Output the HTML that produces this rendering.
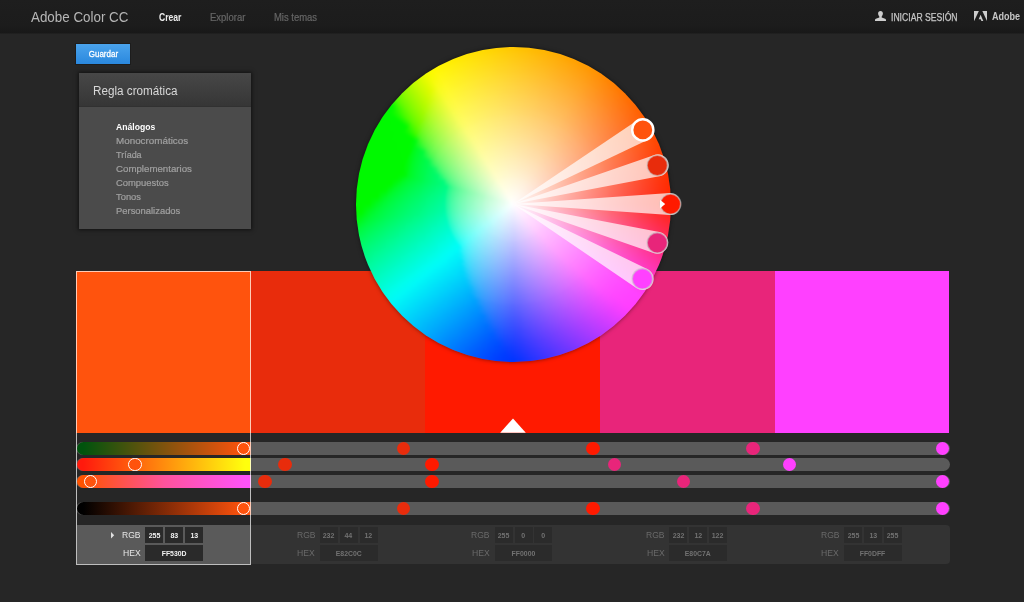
<!DOCTYPE html>
<html lang="es">
<head>
<meta charset="utf-8">
<title>Adobe Color CC</title>
<style>
*{box-sizing:border-box;margin:0;padding:0}
html,body{width:1024px;height:602px;overflow:hidden;background:#262626;font-family:"Liberation Sans",sans-serif;color:#ccc}
.abs{position:absolute}
#hdr{position:absolute;left:0;top:0;width:1024px;height:34px;background:linear-gradient(#1e1e1e 0,#1c1c1c 25px,#181818 33px,#1f1f1f 33px,#202020 34px)}
#hdr .t{position:absolute;white-space:nowrap;line-height:1;transform-origin:0 50%}
#logo{left:31px;top:9.500px;font-size:14px;color:#b6b6b6;transform:scaleX(.956)}
.nav{font-size:10px;top:12.600px;color:#666;-webkit-text-stroke:.2px #666}
#save{position:absolute;left:76px;top:44px;width:54px;height:20px;background:linear-gradient(#4aa3ec,#2a88de);box-shadow:0 0 0 1px rgba(20,20,20,.5);color:#fff;font-size:9.500px;text-align:center;line-height:20px}
#save span{display:inline-block;transform:scaleX(.84);-webkit-text-stroke:.3px #fff}
#panel{position:absolute;left:78.5px;top:72.5px;width:172.5px;height:156px;background:#4b4b4b;box-shadow:0 0 4px 1px rgba(0,0,0,.55)}
#panel .ph{position:absolute;left:0;top:0;width:100%;height:34px;background:linear-gradient(#474747,#363636);border-bottom:1px solid #313131}
#panel .pt{position:absolute;left:14px;top:12px;font-size:12px;line-height:1;color:#d8d8d8;white-space:nowrap;transform:scaleX(.975);transform-origin:0 50%}
#panel ul{position:absolute;left:37px;top:47px;list-style:none}
#panel li{font-size:9.500px;line-height:14px;height:14px;color:#a0a0a0;-webkit-text-stroke:.2px #a0a0a0;white-space:nowrap;transform-origin:0 50%;width:120px}
#panel li.on{color:#fff;font-weight:bold;-webkit-text-stroke:0}
.sw{position:absolute;top:271px;height:162px}
#wheel{position:absolute;left:355.5px;top:46.6px;width:315px;height:315px;border-radius:50%;box-shadow:0 0 4px 0 rgba(0,0,0,.5)}
#wheel .rg{position:absolute;left:0;top:0;width:315px;height:315px;border-radius:50%;overflow:hidden}
#wheel .rb{position:absolute;left:0;top:0;width:315px;height:315px;filter:blur(1.6px)}
#wheel i{position:absolute;left:50%;top:50%;border-radius:50%;display:block}
.trk{position:absolute;left:76px;width:873.5px;height:13px;border-radius:6.5px;background:#5a5a5a}
.grad{position:absolute;left:77px;width:174px;height:13px;border-radius:6.5px 0 0 6.5px}
.dot{position:absolute;width:13.4px;height:13.4px;border-radius:50%;margin:-6.7px 0 0 -6.7px}
.hdl{position:absolute;width:13.6px;height:13.6px;border-radius:50%;margin:-6.8px 0 0 -6.8px;border:1px solid #fff;background:#ff530d}
#vals{position:absolute;left:251px;top:525px;width:698.5px;height:38.5px;background:#333;border-radius:0 4px 4px 0}
#selbox{position:absolute;left:76px;top:271px;width:175px;height:294px;border:1px solid rgba(255,255,255,.7)}
#selpanel{position:absolute;left:77px;top:525px;width:173px;height:39px;background:#5a5a5a}
.lbl{position:absolute;font-size:9.300px;line-height:1;white-space:nowrap;transform-origin:0 50%}
.bx{position:absolute;background:#2b2b2b;font-size:7.800px;font-weight:bold;text-align:center;white-space:nowrap}
.bx span{display:inline-block}
</style>
</head>
<body>
<div id="hdr">
 <div class="t" id="logo">Adobe Color CC</div>
 <div class="t nav" style="left:158.5px;color:#ececec;font-weight:bold;-webkit-text-stroke:0;transform:scaleX(.86)">Crear</div>
 <div class="t nav" style="left:209.5px;transform:scaleX(.95)">Explorar</div>
 <div class="t nav" style="left:274px;transform:scaleX(.945)">Mis temas</div>
 <svg class="abs" style="left:875px;top:11px" width="11" height="10" viewBox="0 0 11 10"><path d="M5.5 0C3.900 0 3.100 1.100 3.100 2.600c0 1.200.500 2.200 1.200 2.800V6.500L.900 7.700C.300 7.900 0 8.300 0 8.900V10h11V8.900c0-.6-.3-1-.9-1.200L6.700 6.500V5.400c.7-.6 1.200-1.600 1.200-2.800C7.900 1.100 7.100 0 5.500 0z" fill="#cdcdcd"/></svg>
 <div class="t" style="left:891px;top:12.600px;font-size:10px;color:#c6c6c6;-webkit-text-stroke:.25px #c6c6c6;transform:scaleX(.862)">INICIAR SESIÓN</div>
 <svg class="abs" style="left:974px;top:11px" width="13.2" height="10.3" viewBox="0 0 13 10" preserveAspectRatio="none"><path d="M0 0h4.800L0 10zM13 0H8.200L13 10zM6.500 3.600L9.300 10H7.400L6.600 7.900H4.600z" fill="#cdcdcd"/></svg>
 <div class="t" style="left:992px;top:11.700px;font-size:10.400px;font-weight:bold;color:#c6c6c6;transform:scaleX(.87)">Adobe</div>
</div>

<div id="save"><span>Guardar</span></div>

<div id="panel">
 <div class="ph"></div>
 <div class="pt">Regla cromática</div>
 <ul>
  <li class="on" style="transform:scaleX(.905)">Análogos</li>
  <li style="transform:scaleX(1.035)">Monocromáticos</li>
  <li style="transform:scaleX(.945)">Tríada</li>
  <li style="transform:scaleX(1.02)">Complementarios</li>
  <li style="transform:scaleX(.99)">Compuestos</li>
  <li style="transform:scaleX(.985)">Tonos</li>
  <li style="transform:scaleX(.99)">Personalizados</li>
 </ul>
</div>

<!-- swatches -->
<div class="sw" style="left:76.0px;width:175.0px;background:#ff530d"></div>
<div class="sw" style="left:250.7px;width:175.0px;background:#e82c0c"></div>
<div class="sw" style="left:425.4px;width:175.0px;background:#ff1a00"></div>
<div class="sw" style="left:600.1px;width:175.0px;background:#e8257a"></div>
<div class="sw" style="left:774.8px;width:174.7px;background:#ff40ff"></div>

<!-- base-colour pointer -->
<svg class="abs" style="left:500px;top:418px" width="26" height="15" viewBox="0 0 26 15"><path d="M.2 14.800L13 .5l12.800 14.300z" fill="#fff"/></svg>

<!-- wheel -->
<div id="wheel"><div class="rg"><div class="rb"><i style="width:331.00px;height:331.00px;margin:-165.50px 0 0 -165.50px;background:conic-gradient(from 90deg,#ff2703,#ff2719,#ff282e,#ff2944,#ff2b5a,#ff2c6f,#ff2f85,#ff319a,#ff34b0,#ff38c5,#ff3bdb,#ff3ff1,#ff41ff,#ff3fff,#ff3eff,#f13dff,#e13cff,#d13aff,#c139ff,#b138ff,#a038ff,#9037ff,#8036ff,#7036ff,#6035ff,#5035ff,#4034ff,#3034ff,#2034ff,#0f34ff,#0135ff,#0039ff,#003fff,#0048ff,#0051ff,#005cfe,#0068fe,#0074fe,#0080fd,#008dfd,#009afd,#00a7fc,#00b5fb,#00c2fb,#00d0fa,#00ddf9,#00ebf8,#00f8f7,#00fdeb,#00fcda,#00fcc9,#00fbb7,#00fba5,#00fa92,#00fa7f,#00fa6b,#00fa55,#00fa3c,#00f915,#00f900,#00f900,#00f900,#00f900,#00f900,#00f900,#00f900,#00f900,#00f900,#00f900,#00f900,#00f900,#00f900,#00fa00,#00fa00,#59fa00,#84fa00,#a5fa00,#c2fb00,#ddfb00,#f7fb00,#fff803,#fff303,#ffee03,#ffe903,#ffe403,#ffe003,#ffdb03,#ffd603,#ffd103,#ffcc03,#ffc703,#ffc203,#ffbd03,#ffb903,#ffb403,#ffaf03,#ffaa03,#ffa503,#ffa003,#ff9c03,#ff9703,#ff9003,#ff8903,#ff8203,#ff7b03,#ff7503,#ff6e03,#ff6703,#ff6103,#ff5b03,#ff5403,#ff4e03,#ff4803,#ff4203,#ff3d03,#ff3803,#ff3303,#ff2f03,#ff2c03,#ff2903,#ff2703)"></i><i style="width:307.12px;height:307.12px;margin:-153.56px 0 0 -153.56px;background:conic-gradient(from 90deg,#ff290a,#ff291f,#ff2a34,#ff2b49,#ff2d5e,#ff2e73,#ff3188,#ff339d,#ff36b2,#ff39c7,#ff3cdc,#ff40f1,#ff42ff,#ff41ff,#ff3fff,#f33eff,#e33dff,#d33cff,#c33bff,#b43aff,#a439ff,#9438ff,#8438ff,#7437ff,#6537ff,#5536ff,#4536ff,#3636ff,#2635ff,#1535ff,#0836ff,#003bff,#0042ff,#004bff,#0055ff,#0060fe,#006bfe,#0077fe,#0083fd,#0090fd,#009dfd,#00aafc,#00b7fb,#00c4fb,#00d1fa,#00def9,#00ebf8,#00f8f7,#00fdec,#00fcdb,#00fcca,#00fbb8,#00fba7,#00fa95,#00fa82,#00fa6f,#00fa5a,#00fa43,#00f923,#00f900,#00f900,#00f900,#00f900,#00f900,#00f900,#00f900,#00f900,#00f900,#00f900,#00f900,#00f900,#00f900,#00fa00,#11fa00,#60fa00,#88fa00,#a8fa00,#c4fb00,#defb00,#f7fb00,#fff80a,#fff30a,#ffef0a,#ffea0a,#ffe50a,#ffe00a,#ffdc0a,#ffd70a,#ffd20a,#ffcd0a,#ffc80a,#ffc40a,#ffbf0a,#ffba0a,#ffb60a,#ffb10a,#ffac0a,#ffa70a,#ffa30a,#ff9e0a,#ff990a,#ff930a,#ff8c0a,#ff850a,#ff7f0a,#ff780a,#ff710a,#ff6b0a,#ff650a,#ff5e0a,#ff580a,#ff520a,#ff4c0a,#ff460a,#ff410a,#ff3c0a,#ff370a,#ff330a,#ff2f0a,#ff2c0a,#ff290a)"></i><i style="width:299.25px;height:299.25px;margin:-149.62px 0 0 -149.62px;background:conic-gradient(from 90deg,#ff2b10,#ff2c24,#ff2c39,#ff2d4d,#ff2f62,#ff3176,#ff338b,#ff359f,#ff38b4,#ff3bc8,#ff3edd,#ff41f1,#ff43ff,#ff42ff,#ff41ff,#f440ff,#e53eff,#d53dff,#c63cff,#b63cff,#a73bff,#983aff,#8839ff,#7939ff,#6938ff,#5a38ff,#4b38ff,#3b37ff,#2c37ff,#1c37ff,#0e38ff,#033eff,#0046ff,#004fff,#0059fe,#0063fe,#006ffe,#007afe,#0086fd,#0093fd,#009ffc,#00acfc,#00b8fb,#00c5fb,#00d2fa,#00dff9,#00ecf8,#00f9f7,#00fdec,#00fcdc,#00fccb,#00fbba,#00fba9,#00fb98,#00fa86,#00fa73,#00fa5f,#00fa49,#00f92e,#00f910,#00f900,#00f900,#00f900,#00f900,#00f900,#00f900,#00f900,#00f900,#00f900,#00f900,#00f900,#00f900,#00fa00,#2afa00,#66fa00,#8cfa00,#aafa00,#c6fb00,#dffb00,#f7fb06,#fff810,#fff410,#ffef10,#ffea10,#ffe610,#ffe110,#ffdc10,#ffd810,#ffd310,#ffce10,#ffca10,#ffc510,#ffc110,#ffbc10,#ffb710,#ffb310,#ffae10,#ffaa10,#ffa510,#ffa010,#ff9c10,#ff9510,#ff8f10,#ff8810,#ff8210,#ff7b10,#ff7510,#ff6f10,#ff6810,#ff6210,#ff5c10,#ff5610,#ff5010,#ff4a10,#ff4510,#ff4010,#ff3b10,#ff3610,#ff3210,#ff2e10,#ff2b10)"></i><i style="width:291.38px;height:291.38px;margin:-145.69px 0 0 -145.69px;background:conic-gradient(from 90deg,#ff2e16,#ff2f2a,#ff2f3e,#ff3052,#ff3266,#ff337a,#ff358e,#ff38a2,#ff3ab6,#ff3dca,#ff40de,#ff43f2,#ff45ff,#ff44ff,#ff43ff,#f541ff,#e640ff,#d73fff,#c83eff,#b93eff,#aa3dff,#9b3cff,#8c3cff,#7d3bff,#6e3bff,#5f3aff,#503aff,#413aff,#3239ff,#2239ff,#143bff,#0a41ff,#0049ff,#0052ff,#005cfe,#0067fe,#0072fe,#007efe,#008afd,#0095fd,#00a2fc,#00aefc,#00bafb,#00c7fb,#00d3fa,#00e0f9,#00ecf8,#00f9f7,#00fdec,#00fcdc,#00fccc,#00fbbc,#00fbab,#00fb9a,#00fa89,#00fa77,#00fa64,#00fa4f,#00fa37,#00f921,#00f900,#00f900,#00f900,#00f900,#00f900,#00f900,#00f900,#00f900,#00f900,#00f900,#00f900,#00fa00,#00fa00,#39fa00,#6cfa00,#8ffa00,#adfa00,#c7fb00,#e0fb00,#f7fb0f,#fff816,#fff416,#ffef16,#ffeb16,#ffe616,#ffe216,#ffdd16,#ffd916,#ffd416,#ffd016,#ffcb16,#ffc716,#ffc216,#ffbe16,#ffb916,#ffb516,#ffb016,#ffac16,#ffa716,#ffa316,#ff9e16,#ff9816,#ff9216,#ff8b16,#ff8516,#ff7f16,#ff7816,#ff7216,#ff6c16,#ff6616,#ff6016,#ff5a16,#ff5416,#ff4f16,#ff4916,#ff4416,#ff3f16,#ff3a16,#ff3616,#ff3216,#ff2e16)"></i><i style="width:283.50px;height:283.50px;margin:-141.75px 0 0 -141.75px;background:conic-gradient(from 90deg,#ff311d,#ff3230,#ff3343,#ff3457,#ff356a,#ff377e,#ff3991,#ff3ba4,#ff3db8,#ff40cb,#ff42df,#ff45f2,#ff47ff,#ff46ff,#ff45ff,#f644ff,#e843ff,#d942ff,#cb41ff,#bc40ff,#ad3fff,#9f3fff,#903eff,#813eff,#733dff,#643dff,#553cff,#473cff,#383cff,#283cff,#1b3eff,#1245ff,#004dff,#0056ff,#0060fe,#006bfe,#0076fe,#0081fe,#008dfd,#0098fd,#00a4fc,#00b0fc,#00bcfb,#00c8fb,#00d4fa,#00e0f9,#00edf8,#00f9f7,#00fded,#00fcdd,#00fccd,#00fbbe,#00fbad,#00fb9d,#00fa8c,#00fa7b,#00fa69,#00fa55,#00fa3f,#00f92d,#00f911,#00f900,#00f900,#00f900,#00f900,#00f900,#00f900,#00f900,#00f900,#00f900,#00f900,#00fa00,#00fa00,#45fa00,#72fa00,#93fa00,#affa00,#c9fb00,#e1fb00,#f8fb17,#fff81d,#fff41d,#fff01d,#ffeb1d,#ffe71d,#ffe21d,#ffde1d,#ffda1d,#ffd51d,#ffd11d,#ffcc1d,#ffc81d,#ffc41d,#ffbf1d,#ffbb1d,#ffb71d,#ffb21d,#ffae1d,#ffaa1d,#ffa51d,#ffa11d,#ff9b1d,#ff951d,#ff8e1d,#ff881d,#ff821d,#ff7c1d,#ff761d,#ff701d,#ff6a1d,#ff641d,#ff5e1d,#ff591d,#ff531d,#ff4d1d,#ff481d,#ff431d,#ff3e1d,#ff3a1d,#ff351d,#ff311d)"></i><i style="width:275.62px;height:275.62px;margin:-137.81px 0 0 -137.81px;background:conic-gradient(from 90deg,#ff3523,#ff3636,#ff3749,#ff385c,#ff396e,#ff3a81,#ff3c94,#ff3ea7,#ff40ba,#ff43cd,#ff45e0,#ff48f2,#ff4aff,#ff49ff,#ff47ff,#f847ff,#e946ff,#db45ff,#cd44ff,#bf43ff,#b042ff,#a242ff,#9441ff,#8541ff,#7740ff,#6940ff,#5b40ff,#4c3fff,#3d3fff,#2e3fff,#2141ff,#1a48ff,#0a51ff,#005aff,#0064fe,#006ffe,#0079fe,#0084fd,#0090fd,#009bfd,#00a7fc,#00b2fc,#00befb,#00cafa,#00d5fa,#00e1f9,#00edf8,#00f9f7,#00fded,#00fcde,#00fccf,#00fbbf,#00fbb0,#00fba0,#00fa90,#00fa7f,#00fa6d,#00fa5b,#00fa46,#00fa36,#00f922,#00f900,#00f900,#00f900,#00f900,#00f900,#00f900,#00f900,#00f900,#00f900,#00fa00,#00fa00,#00fa00,#4ffa00,#78fa00,#97fa00,#b2fa00,#cafb00,#e2fb0f,#f8fb1f,#fff923,#fff423,#fff023,#ffec23,#ffe723,#ffe323,#ffdf23,#ffdb23,#ffd623,#ffd223,#ffce23,#ffca23,#ffc523,#ffc123,#ffbd23,#ffb923,#ffb423,#ffb023,#ffac23,#ffa823,#ffa423,#ff9d23,#ff9723,#ff9123,#ff8b23,#ff8523,#ff7f23,#ff7a23,#ff7423,#ff6e23,#ff6823,#ff6223,#ff5d23,#ff5723,#ff5223,#ff4d23,#ff4723,#ff4323,#ff3e23,#ff3923,#ff3523)"></i><i style="width:267.75px;height:267.75px;margin:-133.88px 0 0 -133.88px;background:conic-gradient(from 90deg,#ff3929,#ff3a3c,#ff3b4e,#ff3c60,#ff3d73,#ff3e85,#ff4097,#ff42aa,#ff44bc,#ff46ce,#ff48e0,#ff4bf3,#ff4dff,#ff4bff,#ff4bff,#f94aff,#eb49ff,#dd48ff,#cf47ff,#c146ff,#b346ff,#a645ff,#9845ff,#8a44ff,#7c44ff,#6e43ff,#6043ff,#5243ff,#4343ff,#3442ff,#2845ff,#214cff,#1555ff,#005eff,#0068fe,#0073fe,#007dfe,#0088fd,#0093fd,#009efd,#00a9fc,#00b4fc,#00c0fb,#00cbfa,#00d6fa,#00e2f9,#00edf8,#00f9f7,#00fded,#00fcdf,#00fcd0,#00fbc1,#00fbb2,#00fba2,#00fb93,#00fa83,#00fa72,#00fa60,#00fa4d,#00fa3f,#00f92e,#00f916,#00f900,#00f900,#00f900,#00f900,#00f900,#00f900,#00f900,#00f900,#00fa00,#00fa00,#03fa00,#58fa00,#7dfa00,#9afa00,#b4fb00,#ccfb09,#e3fb1b,#f8fb26,#fff929,#fff429,#fff029,#ffec29,#ffe829,#ffe429,#ffe029,#ffdc29,#ffd729,#ffd329,#ffcf29,#ffcb29,#ffc729,#ffc329,#ffbf29,#ffbb29,#ffb629,#ffb229,#ffae29,#ffaa29,#ffa629,#ffa029,#ff9a29,#ff9429,#ff8f29,#ff8929,#ff8329,#ff7d29,#ff7829,#ff7229,#ff6c29,#ff6729,#ff6129,#ff5c29,#ff5629,#ff5129,#ff4c29,#ff4729,#ff4229,#ff3e29,#ff3929)"></i><i style="width:259.88px;height:259.88px;margin:-129.94px 0 0 -129.94px;background:conic-gradient(from 90deg,#ff3e30,#ff3f42,#ff3f53,#ff4065,#ff4177,#ff4389,#ff449a,#ff46ac,#ff48be,#ff4ad0,#ff4ce1,#ff4ef3,#ff50ff,#ff4fff,#ff4eff,#fa4dff,#ec4cff,#df4bff,#d14bff,#c44aff,#b64aff,#a949ff,#9b48ff,#8e48ff,#8048ff,#7347ff,#6547ff,#5747ff,#4946ff,#3a46ff,#2e49ff,#2851ff,#1e59ff,#0a63fe,#006cfe,#0076fe,#0081fe,#008bfd,#0096fd,#00a1fd,#00abfc,#00b6fc,#00c1fb,#00cdfa,#00d8fa,#00e3f9,#00eef8,#00f9f8,#00fdee,#00fce0,#00fcd1,#00fbc3,#00fbb4,#00fba5,#00fb96,#00fa87,#00fa77,#00fa66,#00fa54,#00fa47,#00fa38,#00f926,#00f905,#00f900,#00f900,#00f900,#00f900,#00f900,#00f900,#00fa00,#00fa00,#00fa00,#27fa00,#60fa00,#82fa00,#9efa00,#b7fb0a,#cefb1a,#e3fb24,#f8fb2d,#fff930,#fff530,#fff130,#ffed30,#ffe930,#ffe530,#ffe130,#ffdd30,#ffd930,#ffd530,#ffd130,#ffcd30,#ffc930,#ffc530,#ffc130,#ffbd30,#ffb930,#ffb530,#ffb130,#ffad30,#ffa930,#ffa330,#ff9d30,#ff9830,#ff9230,#ff8c30,#ff8730,#ff8130,#ff7b30,#ff7630,#ff7030,#ff6b30,#ff6630,#ff6030,#ff5b30,#ff5630,#ff5130,#ff4c30,#ff4730,#ff4230,#ff3e30)"></i><i style="width:252.00px;height:252.00px;margin:-126.00px 0 0 -126.00px;background:conic-gradient(from 90deg,#ff4336,#ff4347,#ff4459,#ff456a,#ff467b,#ff478c,#ff499d,#ff4aaf,#ff4cc0,#ff4ed1,#ff50e2,#ff52f4,#ff53ff,#ff52ff,#ff52ff,#fb51ff,#ee50ff,#e14fff,#d44fff,#c74eff,#b94eff,#ac4dff,#9f4dff,#924cff,#854cff,#774bff,#6a4bff,#5c4bff,#4f4bff,#404aff,#354dff,#2f55ff,#265eff,#1867fe,#0070fe,#007afe,#0084fe,#008ffd,#0099fd,#00a3fd,#00aefc,#00b9fc,#00c3fb,#00cefa,#00d9fa,#00e4f9,#00eef8,#00f9f8,#00fdee,#00fce0,#00fcd2,#00fcc4,#00fbb6,#00fba8,#00fb99,#00fa8a,#00fa7b,#00fa6b,#00fa5a,#00fa4e,#00fa41,#00fa32,#00f91e,#00f900,#00f900,#00f900,#00f900,#00f900,#00f900,#00fa00,#00fa00,#00fa00,#39fa00,#67fa00,#87fa00,#a1fa10,#b9fb1c,#cffb25,#e4fb2d,#f8fb34,#fff936,#fff536,#fff136,#ffed36,#ffe936,#ffe536,#ffe136,#ffde36,#ffda36,#ffd636,#ffd236,#ffce36,#ffca36,#ffc636,#ffc236,#ffbe36,#ffbb36,#ffb736,#ffb336,#ffaf36,#ffab36,#ffa636,#ffa036,#ff9b36,#ff9536,#ff9036,#ff8a36,#ff8536,#ff7f36,#ff7a36,#ff7536,#ff6f36,#ff6a36,#ff6536,#ff6036,#ff5b36,#ff5636,#ff5136,#ff4c36,#ff4736,#ff4336)"></i><i style="width:244.12px;height:244.12px;margin:-122.06px 0 0 -122.06px;background:conic-gradient(from 90deg,#ff483d,#ff484d,#ff495e,#ff4a6f,#ff4b7f,#ff4c90,#ff4da1,#ff4fb1,#ff50c2,#ff52d3,#ff54e3,#ff56f4,#ff57ff,#ff56ff,#ff56ff,#fc55ff,#ef54ff,#e253ff,#d653ff,#c952ff,#bc52ff,#af51ff,#a351ff,#9650ff,#8950ff,#7c50ff,#6f4fff,#624fff,#544fff,#464fff,#3b51ff,#355aff,#2e62ff,#226bfe,#0d75fe,#007efe,#0088fe,#0092fd,#009cfd,#00a6fc,#00b0fc,#00bbfc,#00c5fb,#00d0fa,#00dafa,#00e4f9,#00eff8,#00f9f8,#00fdee,#00fce1,#00fcd4,#00fcc6,#00fbb8,#00fbab,#00fb9d,#00fa8e,#00fa7f,#00fa70,#00fa60,#00fa55,#00fa49,#00fa3c,#00fa2c,#00f916,#00f900,#00f900,#00f900,#00f900,#00fa00,#00fa00,#00fa00,#00fa00,#47fa00,#6efa0c,#8bfa18,#a5fa20,#bcfb28,#d1fb2e,#e5fb35,#f9fb3b,#fff93d,#fff53d,#fff13d,#ffee3d,#ffea3d,#ffe63d,#ffe23d,#ffdf3d,#ffdb3d,#ffd73d,#ffd33d,#ffcf3d,#ffcc3d,#ffc83d,#ffc43d,#ffc03d,#ffbd3d,#ffb93d,#ffb53d,#ffb23d,#ffae3d,#ffa83d,#ffa33d,#ff9e3d,#ff983d,#ff933d,#ff8e3d,#ff883d,#ff833d,#ff7e3d,#ff793d,#ff743d,#ff6e3d,#ff693d,#ff643d,#ff5f3d,#ff5b3d,#ff563d,#ff513d,#ff4c3d,#ff483d)"></i><i style="width:236.25px;height:236.25px;margin:-118.12px 0 0 -118.12px;background:conic-gradient(from 90deg,#ff4d43,#ff4e53,#ff4e63,#ff4f73,#ff5083,#ff5194,#ff52a4,#ff54b4,#ff55c4,#ff57d4,#ff58e4,#ff5af4,#ff5bff,#ff5aff,#ff5aff,#fd59ff,#f058ff,#e458ff,#d857ff,#cb57ff,#bf56ff,#b356ff,#a655ff,#9a55ff,#8d55ff,#8154ff,#7454ff,#6754ff,#5a54ff,#4c53ff,#4156ff,#3c5eff,#3567ff,#2c70fe,#1d79fe,#0082fe,#008cfe,#0095fd,#009ffd,#00a9fc,#00b3fc,#00bdfb,#00c7fb,#00d1fa,#00dbfa,#00e5f9,#00eff8,#00faf8,#00fdef,#00fce2,#00fcd5,#00fcc8,#00fbbb,#00fbad,#00fba0,#00fb92,#00fa84,#00fa75,#00fa66,#00fa5c,#00fa51,#00fa45,#00fa37,#00fa27,#00f90e,#00f900,#00f900,#00fa00,#00fa00,#00fa00,#00fa08,#01fa12,#52fa1a,#75fa21,#90fa27,#a8fb2c,#befb32,#d2fb37,#e6fb3c,#f9fb41,#fff943,#fff543,#fff243,#ffee43,#ffea43,#ffe743,#ffe343,#ffe043,#ffdc43,#ffd843,#ffd543,#ffd143,#ffcd43,#ffca43,#ffc643,#ffc243,#ffbf43,#ffbb43,#ffb843,#ffb443,#ffb043,#ffab43,#ffa643,#ffa143,#ff9c43,#ff9643,#ff9143,#ff8c43,#ff8743,#ff8243,#ff7d43,#ff7843,#ff7343,#ff6e43,#ff6943,#ff6443,#ff5f43,#ff5b43,#ff5643,#ff5243,#ff4d43)"></i><i style="width:228.38px;height:228.38px;margin:-114.19px 0 0 -114.19px;background:conic-gradient(from 90deg,#ff5249,#ff5359,#ff5468,#ff5478,#ff5588,#ff5697,#ff57a7,#ff58b6,#ff5ac6,#ff5bd5,#ff5de5,#ff5ff5,#ff5fff,#ff5fff,#ff5eff,#fe5eff,#f25dff,#e65cff,#da5cff,#ce5bff,#c25bff,#b65bff,#aa5aff,#9e5aff,#925aff,#8559ff,#7959ff,#6c59ff,#6059ff,#5258ff,#485bff,#4363ff,#3d6bff,#3474fe,#297dfe,#1586fe,#0090fe,#0099fd,#00a2fd,#00acfc,#00b5fc,#00bffb,#00c9fb,#00d3fa,#00dcfa,#00e6f9,#00f0f8,#00faf8,#00fdef,#00fce3,#00fcd6,#00fcca,#00fbbd,#00fbb0,#00fba3,#00fb96,#00fa88,#00fa7a,#00fa6c,#00fa62,#00fa58,#00fa4d,#00fa41,#00fa34,#00fa23,#00f906,#00fa0c,#00fa12,#00fa17,#00fa1c,#00fa20,#2afa25,#5cfa29,#7bfa2e,#95fa32,#abfb37,#c0fb3b,#d4fb3f,#e7fb44,#f9fb48,#fff949,#fff649,#fff249,#ffef49,#ffeb49,#ffe849,#ffe449,#ffe149,#ffdd49,#ffd949,#ffd649,#ffd249,#ffcf49,#ffcb49,#ffc849,#ffc449,#ffc149,#ffbd49,#ffba49,#ffb649,#ffb349,#ffae49,#ffa949,#ffa449,#ff9f49,#ff9a49,#ff9549,#ff9049,#ff8b49,#ff8649,#ff8149,#ff7c49,#ff7849,#ff7349,#ff6e49,#ff6949,#ff6549,#ff6049,#ff5b49,#ff5749,#ff5249)"></i><i style="width:220.50px;height:220.50px;margin:-110.25px 0 0 -110.25px;background:conic-gradient(from 90deg,#ff5850,#ff585f,#ff596e,#ff5a7d,#ff5b8c,#ff5b9b,#ff5caa,#ff5eb9,#ff5fc8,#ff60d7,#ff62e6,#ff63f5,#ff64ff,#ff63ff,#ff63ff,#fe62ff,#f362ff,#e761ff,#dc61ff,#d060ff,#c560ff,#b960ff,#ad5fff,#a15fff,#965fff,#8a5eff,#7e5eff,#725eff,#655eff,#595dff,#4e60ff,#4a68ff,#4470ff,#3c79fe,#3382fe,#258afe,#0893fd,#009cfd,#00a6fd,#00affc,#00b8fc,#00c1fb,#00cbfb,#00d4fa,#00ddfa,#00e7f9,#00f0f9,#00faf8,#00fdf0,#00fce4,#00fcd8,#00fccb,#00fbbf,#00fbb3,#00fba6,#00fb9a,#00fb8d,#00fa7f,#00fa72,#00fa68,#00fa5f,#00fa55,#00fa4a,#00fa3f,#00fa32,#00fa21,#00fa23,#00fa26,#00fa29,#00fa2c,#00fa2f,#3dfa32,#65fa35,#81fa39,#99fb3c,#affb40,#c3fb43,#d6fb47,#e8fb4b,#f9fc4e,#fff950,#fff650,#fff350,#ffef50,#ffec50,#ffe850,#ffe550,#ffe250,#ffde50,#ffdb50,#ffd750,#ffd450,#ffd150,#ffcd50,#ffca50,#ffc650,#ffc350,#ffc050,#ffbc50,#ffb950,#ffb650,#ffb150,#ffac50,#ffa750,#ffa250,#ff9d50,#ff9950,#ff9450,#ff8f50,#ff8a50,#ff8650,#ff8150,#ff7c50,#ff7750,#ff7350,#ff6e50,#ff6a50,#ff6550,#ff6150,#ff5c50,#ff5850)"></i><i style="width:212.62px;height:212.62px;margin:-106.31px 0 0 -106.31px;background:conic-gradient(from 90deg,#ff5e56,#ff5e65,#ff5f73,#ff5f82,#ff6090,#ff619e,#ff62ad,#ff63bb,#ff64ca,#ff65d8,#ff66e7,#ff68f5,#ff69ff,#ff68ff,#ff68ff,#ff67ff,#f467ff,#e966ff,#de66ff,#d365ff,#c765ff,#bc65ff,#b164ff,#a564ff,#9a64ff,#8e63ff,#8363ff,#7763ff,#6b63ff,#5f63ff,#5565ff,#506dff,#4b75ff,#447dfe,#3c86fe,#318efe,#2097fd,#00a0fd,#00a9fd,#00b2fc,#00bbfc,#00c4fb,#00cdfb,#00d6fa,#00dffa,#00e8f9,#00f1f9,#00faf8,#00fdf0,#00fce4,#00fcd9,#00fccd,#00fcc1,#00fbb5,#00fba9,#00fb9d,#00fb91,#00fa84,#00fa77,#00fa6f,#00fa66,#00fa5c,#00fa53,#00fa48,#00fa3d,#00fa30,#00fa32,#00fa34,#00fa36,#00fa38,#00fa3a,#4bfa3d,#6dfa40,#87fa42,#9dfb45,#b2fb48,#c5fb4b,#d7fb4f,#e9fb52,#f9fc55,#fff956,#fff656,#fff356,#fff056,#ffec56,#ffe956,#ffe656,#ffe356,#ffdf56,#ffdc56,#ffd956,#ffd556,#ffd256,#ffcf56,#ffcc56,#ffc856,#ffc556,#ffc256,#ffbf56,#ffbb56,#ffb856,#ffb356,#ffaf56,#ffaa56,#ffa556,#ffa156,#ff9c56,#ff9856,#ff9356,#ff8e56,#ff8a56,#ff8556,#ff8156,#ff7c56,#ff7856,#ff7356,#ff6f56,#ff6a56,#ff6656,#ff6256,#ff5e56)"></i><i style="width:204.75px;height:204.75px;margin:-102.38px 0 0 -102.38px;background:conic-gradient(from 90deg,#ff635c,#ff646a,#ff6478,#ff6586,#ff6694,#ff66a2,#ff67b0,#ff68be,#ff69cc,#ff6ada,#ff6ce8,#ff6df6,#ff6eff,#ff6dff,#ff6dff,#ff6cff,#f56cff,#ea6bff,#e06bff,#d56aff,#ca6aff,#bf6aff,#b469ff,#a969ff,#9e69ff,#9369ff,#8868ff,#7c68ff,#7168ff,#6568ff,#5b6aff,#5772ff,#527aff,#4c82fe,#448afe,#3b93fe,#2f9bfd,#1ba3fd,#00acfd,#00b4fc,#00bdfc,#00c6fb,#00cefb,#00d7fa,#00e0fa,#00e9f9,#00f1f9,#00faf8,#00fdf0,#00fde5,#00fcda,#00fccf,#00fcc4,#00fbb8,#00fbad,#00fba1,#00fb95,#00fb89,#00fa7d,#00fa75,#00fa6c,#00fa64,#00fa5b,#00fa51,#00fa47,#00fa3c,#00fa3e,#00fa3f,#00fa41,#00fa43,#28fa45,#57fa47,#75fa49,#8dfb4b,#a2fb4e,#b5fb50,#c7fb53,#d9fb56,#e9fb59,#fafc5b,#fffa5c,#fff65c,#fff35c,#fff05c,#ffed5c,#ffea5c,#ffe75c,#ffe45c,#ffe05c,#ffdd5c,#ffda5c,#ffd75c,#ffd45c,#ffd15c,#ffce5c,#ffca5c,#ffc75c,#ffc45c,#ffc15c,#ffbe5c,#ffbb5c,#ffb65c,#ffb25c,#ffad5c,#ffa95c,#ffa45c,#ffa05c,#ff9b5c,#ff975c,#ff935c,#ff8e5c,#ff8a5c,#ff855c,#ff815c,#ff7d5c,#ff785c,#ff745c,#ff705c,#ff6c5c,#ff675c,#ff635c)"></i><i style="width:196.88px;height:196.88px;margin:-98.44px 0 0 -98.44px;background:conic-gradient(from 90deg,#ff6963,#ff6970,#ff6a7e,#ff6b8b,#ff6b98,#ff6ca6,#ff6db3,#ff6ec1,#ff6fce,#ff70db,#ff71e9,#ff72f6,#ff72ff,#ff72ff,#ff72ff,#ff71ff,#f671ff,#ec70ff,#e170ff,#d770ff,#cd6fff,#c26fff,#b76fff,#ad6eff,#a26eff,#976eff,#8d6eff,#826eff,#766dff,#6b6dff,#6270ff,#5e77ff,#597fff,#5387fe,#4d8ffe,#4597fe,#3b9ffd,#2da7fd,#16affd,#00b7fc,#00c0fc,#00c8fb,#00d0fb,#00d9fa,#00e1fa,#00e9f9,#00f2f9,#00faf8,#00fdf1,#00fde6,#00fcdb,#00fcd1,#00fcc6,#00fbbb,#00fbb0,#00fba5,#00fb9a,#00fb8e,#00fa82,#00fa7b,#00fa73,#00fa6b,#00fa62,#00fa5a,#00fa51,#00fa47,#00fa48,#00fa4a,#00fa4b,#00fa4d,#3efa4e,#62fa50,#7cfb52,#92fb54,#a6fb56,#b8fb58,#cafb5b,#dafb5d,#eafc5f,#fafc62,#fffa63,#fff763,#fff463,#fff163,#ffee63,#ffeb63,#ffe863,#ffe563,#ffe263,#ffde63,#ffdb63,#ffd863,#ffd563,#ffd263,#ffcf63,#ffcc63,#ffc963,#ffc663,#ffc363,#ffc063,#ffbd63,#ffb963,#ffb563,#ffb063,#ffac63,#ffa863,#ffa463,#ff9f63,#ff9b63,#ff9763,#ff9263,#ff8e63,#ff8a63,#ff8663,#ff8263,#ff7d63,#ff7963,#ff7563,#ff7163,#ff6d63,#ff6963)"></i><i style="width:189.00px;height:189.00px;margin:-94.50px 0 0 -94.50px;background:conic-gradient(from 90deg,#ff6f69,#ff6f76,#ff7083,#ff7090,#ff719d,#ff72a9,#ff72b6,#ff73c3,#ff74d0,#ff75dd,#ff76ea,#ff77f6,#ff78ff,#ff77ff,#ff77ff,#ff76ff,#f776ff,#ed76ff,#e375ff,#d975ff,#cf75ff,#c574ff,#bb74ff,#b074ff,#a674ff,#9c73ff,#9173ff,#8773ff,#7c73ff,#7173ff,#6875ff,#647cff,#6084ff,#5b8bfe,#5593fe,#4e9bfe,#45a3fd,#3baafd,#2cb2fd,#12bafc,#00c2fc,#00cafb,#00d2fb,#00dafb,#00e2fa,#00eafa,#00f2f9,#00faf8,#00fdf1,#00fde7,#00fcdd,#00fcd3,#00fcc8,#00fcbe,#00fbb3,#00fba9,#00fb9e,#00fb93,#00fb88,#00fa80,#00fa79,#00fa71,#00fa6a,#00fa62,#00fa59,#00fa51,#00fa52,#00fa53,#00fa54,#17fa56,#4dfa57,#6bfa59,#83fb5a,#97fb5c,#aafb5e,#bbfb60,#ccfb62,#dcfb64,#ebfc66,#fafc68,#fffa69,#fff769,#fff469,#fff169,#ffee69,#ffeb69,#ffe869,#ffe669,#ffe369,#ffe069,#ffdd69,#ffda69,#ffd769,#ffd469,#ffd169,#ffce69,#ffcc69,#ffc969,#ffc669,#ffc369,#ffc069,#ffbc69,#ffb869,#ffb469,#ffaf69,#ffab69,#ffa769,#ffa369,#ff9f69,#ff9b69,#ff9769,#ff9369,#ff8f69,#ff8b69,#ff8769,#ff8369,#ff7f69,#ff7b69,#ff7769,#ff7369,#ff6f69)"></i><i style="width:181.12px;height:181.12px;margin:-90.56px 0 0 -90.56px;background:conic-gradient(from 90deg,#ff7570,#ff757c,#ff7688,#ff7694,#ff77a1,#ff77ad,#ff78b9,#ff79c6,#ff7ad2,#ff7ade,#ff7beb,#ff7cf7,#ff7dff,#ff7cff,#ff7cff,#ff7cff,#f87bff,#ef7bff,#e57bff,#db7aff,#d27aff,#c87aff,#be7aff,#b479ff,#aa79ff,#a079ff,#9679ff,#8c79ff,#8278ff,#7778ff,#6e7bff,#6b82ff,#6789fe,#6290fe,#5d98fe,#569ffe,#4fa6fd,#46aefd,#3bb5fd,#2cbdfc,#11c5fc,#00ccfc,#00d4fb,#00dcfb,#00e3fa,#00ebfa,#00f3f9,#00fbf8,#00fdf2,#00fde8,#00fcde,#00fcd4,#00fcca,#00fcc0,#00fbb6,#00fbac,#00fba2,#00fb98,#00fb8d,#00fb86,#00fa7f,#00fa78,#00fa71,#00fa69,#00fa62,#00fa5a,#00fa5b,#00fa5c,#00fa5d,#36fa5e,#5afa60,#74fb61,#89fb62,#9cfb64,#aefb66,#bffb67,#cefb69,#ddfb6b,#ecfc6d,#fafc6f,#fffa70,#fff770,#fff470,#fff270,#ffef70,#ffec70,#ffe970,#ffe770,#ffe470,#ffe170,#ffde70,#ffdb70,#ffd970,#ffd670,#ffd370,#ffd070,#ffce70,#ffcb70,#ffc870,#ffc570,#ffc370,#ffbf70,#ffbb70,#ffb770,#ffb370,#ffaf70,#ffab70,#ffa770,#ffa370,#ff9f70,#ff9b70,#ff9770,#ff9370,#ff8f70,#ff8c70,#ff8870,#ff8470,#ff8070,#ff7c70,#ff7970,#ff7570)"></i><i style="width:173.25px;height:173.25px;margin:-86.62px 0 0 -86.62px;background:conic-gradient(from 90deg,#ff7b76,#ff7b82,#ff7c8d,#ff7c99,#ff7da5,#ff7db1,#ff7ebc,#ff7ec8,#ff7fd4,#ff80e0,#ff81eb,#ff82f7,#ff82ff,#ff82ff,#ff81ff,#ff81ff,#f981ff,#f081ff,#e780ff,#dd80ff,#d480ff,#cb7fff,#c17fff,#b87fff,#ae7fff,#a57fff,#9b7eff,#917eff,#877eff,#7d7eff,#7580ff,#7187ff,#6e8efe,#6995fe,#649cfe,#5fa3fe,#58aafd,#51b1fd,#48b9fd,#3dc0fc,#2ec7fc,#14cffc,#00d6fb,#00ddfb,#00e5fa,#00ecfa,#00f3f9,#00fbf9,#00fdf2,#00fde9,#00fde0,#00fcd6,#00fccd,#00fcc3,#00fcba,#00fbb0,#00fba6,#00fb9c,#00fb93,#00fb8c,#00fb85,#00fb7f,#00fa78,#00fa71,#00fa6a,#00fa63,#00fa63,#00fa64,#12fa65,#49fb67,#66fb68,#7cfb69,#90fb6a,#a2fb6c,#b2fb6d,#c2fb6f,#d1fb70,#dffc72,#edfc74,#fbfc75,#fffa76,#fff876,#fff576,#fff276,#fff076,#ffed76,#ffea76,#ffe876,#ffe576,#ffe276,#ffe076,#ffdd76,#ffda76,#ffd876,#ffd576,#ffd276,#ffd076,#ffcd76,#ffcb76,#ffc876,#ffc576,#ffc176,#ffbe76,#ffba76,#ffb676,#ffb276,#ffaf76,#ffab76,#ffa776,#ffa376,#ffa076,#ff9c76,#ff9876,#ff9476,#ff9176,#ff8d76,#ff8976,#ff8676,#ff8276,#ff7e76,#ff7b76)"></i><i style="width:165.38px;height:165.38px;margin:-82.69px 0 0 -82.69px;background:conic-gradient(from 90deg,#ff817c,#ff8188,#ff8193,#ff829e,#ff82a9,#ff83b4,#ff84c0,#ff84cb,#ff85d6,#ff86e1,#ff86ec,#ff87f8,#ff87ff,#ff87ff,#ff87ff,#ff87ff,#fa86ff,#f186ff,#e886ff,#df86ff,#d685ff,#cd85ff,#c485ff,#bb85ff,#b284ff,#a984ff,#a084ff,#9684ff,#8d84ff,#8384ff,#7b86ff,#788cff,#7493fe,#709afe,#6ca0fe,#67a7fe,#61aefd,#5bb5fd,#53bcfd,#4bc3fc,#40cafc,#31d1fc,#1ad8fb,#00dffb,#00e6fa,#00edfa,#00f4f9,#00fbf9,#00fdf3,#00fdea,#00fde1,#00fcd8,#00fccf,#00fcc6,#00fcbd,#00fbb4,#00fbaa,#00fba1,#00fb98,#00fb92,#00fb8b,#00fb85,#00fb7f,#00fa78,#00fa72,#00fa6b,#00fa6c,#00fa6d,#36fb6e,#58fb6f,#70fb70,#84fb71,#96fb72,#a7fb73,#b6fb74,#c5fb76,#d3fc77,#e0fc79,#eefc7a,#fbfc7c,#fffa7c,#fff87c,#fff57c,#fff37c,#fff07c,#ffee7c,#ffeb7c,#ffe97c,#ffe67c,#ffe47c,#ffe17c,#ffdf7c,#ffdc7c,#ffda7c,#ffd77c,#ffd47c,#ffd27c,#ffcf7c,#ffcd7c,#ffca7c,#ffc87c,#ffc47c,#ffc17c,#ffbd7c,#ffb97c,#ffb67c,#ffb27c,#ffaf7c,#ffab7c,#ffa77c,#ffa47c,#ffa07c,#ff9d7c,#ff997c,#ff967c,#ff927c,#ff8f7c,#ff8b7c,#ff887c,#ff847c,#ff817c)"></i><i style="width:157.50px;height:157.50px;margin:-78.75px 0 0 -78.75px;background:conic-gradient(from 90deg,#ff8783,#ff878d,#ff8798,#ff88a3,#ff88ad,#ff89b8,#ff89c3,#ff8acd,#ff8bd8,#ff8be3,#ff8ced,#ff8df8,#ff8dff,#ff8dff,#ff8cff,#ff8cff,#fb8cff,#f28cff,#ea8bff,#e18bff,#d98bff,#d08bff,#c88bff,#bf8aff,#b68aff,#ad8aff,#a48aff,#9b8aff,#928aff,#8989ff,#828bff,#7f92ff,#7b98fe,#789ffe,#74a5fe,#6fabfe,#6ab2fd,#64b9fd,#5ebffd,#57c6fc,#4eccfc,#44d3fc,#36dafb,#23e0fb,#00e7fa,#00eefa,#00f4f9,#00fbf9,#00fdf3,#00fdeb,#00fde2,#00fcda,#00fcd1,#00fcc9,#00fcc0,#00fcb7,#00fbaf,#00fba6,#00fb9d,#00fb97,#00fb91,#00fb8b,#00fb85,#00fb7f,#00fb79,#00fa73,#00fb74,#20fb75,#4bfb75,#65fb76,#7afb77,#8cfb78,#9cfb79,#abfb7a,#bafb7c,#c8fb7d,#d5fc7e,#e2fc7f,#effc81,#fbfc82,#fffb83,#fff883,#fff683,#fff383,#fff183,#ffef83,#ffec83,#ffea83,#ffe783,#ffe583,#ffe283,#ffe083,#ffde83,#ffdb83,#ffd983,#ffd783,#ffd483,#ffd283,#ffcf83,#ffcd83,#ffcb83,#ffc783,#ffc483,#ffc083,#ffbd83,#ffb983,#ffb683,#ffb383,#ffaf83,#ffac83,#ffa883,#ffa583,#ffa183,#ff9e83,#ff9b83,#ff9783,#ff9483,#ff9183,#ff8d83,#ff8a83,#ff8783)"></i><i style="width:149.62px;height:149.62px;margin:-74.81px 0 0 -74.81px;background:conic-gradient(from 90deg,#ff8d89,#ff8d93,#ff8d9d,#ff8ea7,#ff8eb1,#ff8fbc,#ff8fc6,#ff90d0,#ff90da,#ff91e4,#ff91ee,#ff92f8,#ff92ff,#ff92ff,#ff92ff,#ff92ff,#fc92ff,#f391ff,#eb91ff,#e391ff,#db91ff,#d390ff,#cb90ff,#c290ff,#ba90ff,#b290ff,#a990ff,#a190ff,#988fff,#8f8fff,#8891ff,#8597ff,#829dfe,#7fa3fe,#7baafe,#77b0fe,#72b6fd,#6dbcfd,#68c2fd,#62c9fc,#5bcffc,#52d5fc,#49dcfb,#3de2fb,#2ce8fb,#0deffa,#00f5fa,#00fbf9,#00fdf4,#00fdec,#00fde4,#00fddc,#00fcd4,#00fccb,#00fcc3,#00fcbb,#00fcb3,#00fbab,#00fba2,#00fb9d,#00fb97,#00fb92,#00fb8c,#00fb86,#00fb81,#00fb7b,#00fb7c,#3ffb7c,#5bfb7d,#70fb7e,#82fb7f,#93fb80,#a2fb81,#b0fb82,#befb83,#cbfc84,#d7fc85,#e4fc86,#effc87,#fbfc89,#fffb89,#fff889,#fff689,#fff489,#fff289,#ffef89,#ffed89,#ffeb89,#ffe889,#ffe689,#ffe489,#ffe289,#ffdf89,#ffdd89,#ffdb89,#ffd989,#ffd689,#ffd489,#ffd289,#ffcf89,#ffcd89,#ffca89,#ffc789,#ffc389,#ffc089,#ffbd89,#ffba89,#ffb689,#ffb389,#ffb089,#ffad89,#ffa989,#ffa689,#ffa389,#ffa089,#ff9d89,#ff9989,#ff9689,#ff9389,#ff9089,#ff8d89)"></i><i style="width:141.75px;height:141.75px;margin:-70.88px 0 0 -70.88px;background:conic-gradient(from 90deg,#ff938f,#ff9399,#ff93a3,#ff94ac,#ff94b6,#ff95bf,#ff95c9,#ff96d2,#ff96dc,#ff97e5,#ff97ef,#ff98f9,#ff98ff,#ff98ff,#ff98ff,#ff97ff,#fc97ff,#f597ff,#ed97ff,#e597ff,#dd96ff,#d696ff,#ce96ff,#c696ff,#be96ff,#b696ff,#ae95ff,#a695ff,#9e95ff,#9595ff,#8f97ff,#8c9dff,#89a2fe,#86a8fe,#82aefe,#7fb4fe,#7bbafd,#76c0fd,#71c6fd,#6cccfc,#66d1fc,#5fd7fc,#58ddfb,#4fe3fb,#44e9fb,#37effa,#23f5fa,#00fbf9,#00fdf4,#00fded,#00fde5,#00fddd,#00fcd6,#00fcce,#00fcc6,#00fcbf,#00fcb7,#00fcaf,#00fba7,#00fba2,#00fb9d,#00fb98,#00fb93,#00fb8d,#00fb88,#00fb83,#34fb83,#52fb84,#68fb85,#7bfb85,#8bfb86,#9afb87,#a8fb88,#b5fc89,#c1fc8a,#cefc8b,#dafc8c,#e5fc8d,#f0fc8e,#fbfc8f,#fffb8f,#fff98f,#fff78f,#fff48f,#fff28f,#fff08f,#ffee8f,#ffec8f,#ffea8f,#ffe78f,#ffe58f,#ffe38f,#ffe18f,#ffdf8f,#ffdd8f,#ffdb8f,#ffd88f,#ffd68f,#ffd48f,#ffd28f,#ffd08f,#ffcd8f,#ffca8f,#ffc78f,#ffc48f,#ffc08f,#ffbd8f,#ffba8f,#ffb78f,#ffb48f,#ffb18f,#ffae8f,#ffab8f,#ffa88f,#ffa58f,#ffa28f,#ff9f8f,#ff9c8f,#ff998f,#ff968f,#ff938f)"></i><i style="width:133.88px;height:133.88px;margin:-66.94px 0 0 -66.94px;background:conic-gradient(from 90deg,#ff9996,#ff999f,#ff99a8,#ff9ab1,#ff9aba,#ff9bc3,#ff9bcc,#ff9bd5,#ff9cde,#ff9ce7,#ff9df0,#ff9df9,#ff9eff,#ff9dff,#ff9dff,#ff9dff,#fd9dff,#f69dff,#ee9dff,#e79cff,#e09cff,#d89cff,#d19cff,#c99cff,#c29cff,#ba9bff,#b39bff,#ab9bff,#a39bff,#9b9bff,#959dff,#92a2ff,#90a8fe,#8dadfe,#8ab3fe,#86b8fe,#83befd,#7fc3fd,#7ac9fd,#76cefd,#71d4fc,#6bdafc,#65dffc,#5ee5fb,#56ebfb,#4df0fa,#41f6fa,#33fcfa,#2dfdf5,#2dfdee,#2dfde6,#2dfddf,#2dfdd8,#2dfcd1,#2dfcca,#2dfcc2,#2dfcbb,#2dfcb4,#2dfcad,#2dfba8,#2dfba3,#2dfb9e,#2dfb99,#2dfb94,#2dfb8f,#2dfb8a,#4cfb8b,#62fb8c,#75fb8c,#84fb8d,#93fb8e,#a0fb8e,#adfc8f,#b9fc90,#c5fc91,#d1fc92,#dcfc93,#e7fc93,#f1fc94,#fcfc95,#fffb96,#fff996,#fff796,#fff596,#fff396,#fff196,#ffef96,#ffed96,#ffeb96,#ffe996,#ffe796,#ffe596,#ffe396,#ffe196,#ffdf96,#ffdd96,#ffdb96,#ffd996,#ffd796,#ffd596,#ffd396,#ffd096,#ffcd96,#ffca96,#ffc796,#ffc496,#ffc196,#ffbe96,#ffbb96,#ffb896,#ffb596,#ffb396,#ffb096,#ffad96,#ffaa96,#ffa796,#ffa496,#ffa196,#ff9f96,#ff9c96,#ff9996)"></i><i style="width:126.00px;height:126.00px;margin:-63.00px 0 0 -63.00px;background:conic-gradient(from 90deg,#ff9f9c,#ff9fa5,#ffa0ad,#ffa0b6,#ffa0be,#ffa1c7,#ffa1cf,#ffa1d7,#ffa2e0,#ffa2e8,#ffa3f1,#ffa3f9,#ffa3ff,#ffa3ff,#ffa3ff,#ffa3ff,#fda3ff,#f7a3ff,#f0a2ff,#e9a2ff,#e2a2ff,#dba2ff,#d4a2ff,#cda2ff,#c6a1ff,#bfa1ff,#b7a1ff,#b0a1ff,#a9a1ff,#a1a1ff,#9ba3ff,#99a8ff,#97adfe,#94b2fe,#91b7fe,#8ebcfe,#8bc2fd,#87c7fd,#83ccfd,#7fd1fd,#7bd7fc,#76dcfc,#71e1fc,#6be7fb,#65ecfb,#5ef1fb,#56f6fa,#4dfcfa,#49fdf5,#49fdef,#49fde8,#49fde1,#49fdda,#49fcd4,#49fccd,#49fcc6,#49fcbf,#49fcb9,#49fcb2,#49fcad,#49fca9,#49fba4,#49fba0,#49fb9b,#49fb96,#49fb92,#5ffb92,#70fb93,#80fb94,#8efb94,#9bfc95,#a7fc95,#b3fc96,#befc97,#c9fc98,#d4fc98,#defc99,#e8fc9a,#f2fc9b,#fcfd9c,#fffb9c,#fff99c,#fff79c,#fff69c,#fff49c,#fff29c,#fff09c,#ffee9c,#ffec9c,#ffea9c,#ffe89c,#ffe69c,#ffe49c,#ffe29c,#ffe19c,#ffdf9c,#ffdd9c,#ffdb9c,#ffd99c,#ffd79c,#ffd59c,#ffd29c,#ffd09c,#ffcd9c,#ffca9c,#ffc89c,#ffc59c,#ffc29c,#ffbf9c,#ffbd9c,#ffba9c,#ffb79c,#ffb49c,#ffb29c,#ffaf9c,#ffac9c,#ffaa9c,#ffa79c,#ffa49c,#ffa29c,#ff9f9c)"></i><i style="width:118.12px;height:118.12px;margin:-59.06px 0 0 -59.06px;background:conic-gradient(from 90deg,#ffa5a3,#ffa5aa,#ffa6b2,#ffa6ba,#ffa6c2,#ffa7ca,#ffa7d2,#ffa7da,#ffa8e2,#ffa8ea,#ffa8f2,#ffa9fa,#ffa9ff,#ffa9ff,#ffa9ff,#ffa9ff,#fea8ff,#f8a8ff,#f1a8ff,#eba8ff,#e4a8ff,#dda8ff,#d7a8ff,#d0a8ff,#c9a7ff,#c3a7ff,#bca7ff,#b5a7ff,#aea7ff,#a7a7ff,#a2a8ff,#a0adff,#9db2ff,#9bb7fe,#98bcfe,#95c1fe,#93c6fe,#8fcafd,#8ccffd,#88d4fd,#85d9fc,#81defc,#7ce3fc,#77e8fb,#72edfb,#6df2fb,#66f7fa,#60fcfa,#5dfef6,#5dfdf0,#5dfde9,#5dfde3,#5dfddd,#5dfdd6,#5dfcd0,#5dfcca,#5dfcc4,#5dfcbd,#5dfcb7,#5dfcb3,#5dfcae,#5dfcaa,#5dfca6,#5dfba2,#5dfb9d,#5dfb99,#6efb9a,#7dfb9a,#8afc9b,#96fc9b,#a2fc9c,#adfc9d,#b8fc9d,#c3fc9e,#cdfc9f,#d7fc9f,#e0fca0,#eafca1,#f3fda1,#fcfda2,#fffba3,#fffaa3,#fff8a3,#fff6a3,#fff4a3,#fff3a3,#fff1a3,#ffefa3,#ffeda3,#ffeba3,#ffeaa3,#ffe8a3,#ffe6a3,#ffe4a3,#ffe3a3,#ffe1a3,#ffdfa3,#ffdda3,#ffdba3,#ffdaa3,#ffd8a3,#ffd5a3,#ffd3a3,#ffd0a3,#ffcea3,#ffcba3,#ffc9a3,#ffc6a3,#ffc3a3,#ffc1a3,#ffbea3,#ffbca3,#ffb9a3,#ffb7a3,#ffb4a3,#ffb2a3,#ffafa3,#ffada3,#ffaaa3,#ffa8a3,#ffa5a3)"></i><i style="width:110.25px;height:110.25px;margin:-55.12px 0 0 -55.12px;background:conic-gradient(from 90deg,#ffaba9,#ffabb0,#ffacb8,#ffacbf,#ffacc6,#ffadce,#ffadd5,#ffaddd,#ffaee4,#ffaeeb,#ffaef3,#ffaffa,#ffafff,#ffafff,#ffafff,#ffaeff,#feaeff,#f8aeff,#f2aeff,#ecaeff,#e6aeff,#e0aeff,#daaeff,#d3adff,#cdadff,#c7adff,#c1adff,#baadff,#b4adff,#adadff,#a8aeff,#a6b3ff,#a4b7ff,#a2bcfe,#9fc0fe,#9dc5fe,#9ac9fe,#97cefd,#95d3fd,#91d7fd,#8edcfd,#8be0fc,#87e5fc,#83eafc,#7feefb,#7af3fb,#75f8fb,#70fcfa,#6efef6,#6efdf1,#6efdeb,#6efde5,#6efddf,#6efdd9,#6efdd3,#6efcce,#6efcc8,#6efcc2,#6efcbc,#6efcb8,#6efcb4,#6efcb0,#6efcac,#6efca8,#6efca4,#6efba1,#7bfca1,#88fca1,#94fca2,#9ffca2,#a9fca3,#b4fca4,#bdfca4,#c7fca5,#d0fca5,#d9fca6,#e2fca7,#ebfda7,#f4fda8,#fcfda9,#fffca9,#fffaa9,#fff8a9,#fff7a9,#fff5a9,#fff3a9,#fff2a9,#fff0a9,#ffeea9,#ffeda9,#ffeba9,#ffe9a9,#ffe8a9,#ffe6a9,#ffe4a9,#ffe3a9,#ffe1a9,#ffdfa9,#ffdea9,#ffdca9,#ffdba9,#ffd8a9,#ffd6a9,#ffd3a9,#ffd1a9,#ffcfa9,#ffcca9,#ffcaa9,#ffc7a9,#ffc5a9,#ffc3a9,#ffc0a9,#ffbea9,#ffbca9,#ffb9a9,#ffb7a9,#ffb5a9,#ffb2a9,#ffb0a9,#ffaea9,#ffaba9)"></i><i style="width:102.38px;height:102.38px;margin:-51.19px 0 0 -51.19px;background:conic-gradient(from 90deg,#ffb1af,#ffb2b6,#ffb2bd,#ffb2c4,#ffb2cb,#ffb3d1,#ffb3d8,#ffb3df,#ffb4e6,#ffb4ed,#ffb4f4,#ffb4fa,#ffb5ff,#ffb5ff,#ffb4ff,#ffb4ff,#ffb4ff,#f9b4ff,#f4b4ff,#eeb4ff,#e8b4ff,#e2b4ff,#ddb3ff,#d7b3ff,#d1b3ff,#cbb3ff,#c5b3ff,#bfb3ff,#b9b3ff,#b3b3ff,#afb4ff,#adb8ff,#abbdff,#a9c1fe,#a7c5fe,#a4c9fe,#a2cdfe,#a0d2fd,#9dd6fd,#9adafd,#97defd,#94e3fc,#91e7fc,#8eebfc,#8aeffc,#86f4fb,#82f8fb,#7efcfb,#7cfef7,#7cfef2,#7cfdec,#7cfde7,#7cfde1,#7cfddc,#7cfdd7,#7cfdd1,#7cfccc,#7cfcc6,#7cfcc1,#7cfcbd,#7cfcba,#7cfcb6,#7cfcb3,#7cfcaf,#7cfcab,#7cfca8,#88fca8,#93fca9,#9dfca9,#a7fcaa,#b1fcaa,#bafcab,#c3fcab,#cbfcac,#d4fcac,#dcfcad,#e4fdad,#edfdae,#f5fdae,#fcfdaf,#fffcaf,#fffaaf,#fff9af,#fff7af,#fff6af,#fff4af,#fff3af,#fff1af,#fff0af,#ffeeaf,#ffedaf,#ffebaf,#ffe9af,#ffe8af,#ffe6af,#ffe5af,#ffe3af,#ffe2af,#ffe0af,#ffdfaf,#ffddaf,#ffdbaf,#ffd9af,#ffd7af,#ffd4af,#ffd2af,#ffd0af,#ffceaf,#ffccaf,#ffc9af,#ffc7af,#ffc5af,#ffc3af,#ffc1af,#ffbeaf,#ffbcaf,#ffbaaf,#ffb8af,#ffb6af,#ffb4af,#ffb1af)"></i><i style="width:94.50px;height:94.50px;margin:-47.25px 0 0 -47.25px;background:conic-gradient(from 90deg,#ffb8b6,#ffb8bc,#ffb8c2,#ffb8c9,#ffb8cf,#ffb9d5,#ffb9db,#ffb9e2,#ffb9e8,#ffbaee,#ffbaf5,#ffbafb,#ffbbff,#ffbaff,#ffbaff,#ffbaff,#ffbaff,#fabaff,#f5baff,#f0baff,#eabaff,#e5baff,#e0b9ff,#dab9ff,#d5b9ff,#cfb9ff,#cab9ff,#c5b9ff,#bfb9ff,#b9b9ff,#b5baff,#b3beff,#b2c2ff,#b0c6fe,#aecafe,#accdfe,#aad1fe,#a7d5fd,#a5d9fd,#a3ddfd,#a0e1fd,#9ee5fd,#9be9fc,#98edfc,#95f1fc,#92f5fb,#8ef9fb,#8bfdfb,#8afef7,#8afef3,#8afdee,#8afde9,#8afde4,#8afddf,#8afdda,#8afdd5,#8afdd0,#8afdcb,#8afcc6,#8afcc3,#8afcbf,#8afcbc,#8afcb9,#8afcb6,#8afcb2,#8afcaf,#94fcaf,#9dfcb0,#a6fcb0,#affcb1,#b7fcb1,#c0fcb1,#c8fcb2,#d0fcb2,#d8fdb3,#dffdb3,#e7fdb4,#eefdb4,#f5fdb5,#fdfdb6,#fffcb6,#fffbb6,#fff9b6,#fff8b6,#fff6b6,#fff5b6,#fff4b6,#fff2b6,#fff1b6,#ffefb6,#ffeeb6,#ffedb6,#ffebb6,#ffeab6,#ffe8b6,#ffe7b6,#ffe6b6,#ffe4b6,#ffe3b6,#ffe1b6,#ffe0b6,#ffdeb6,#ffdcb6,#ffdab6,#ffd8b6,#ffd6b6,#ffd4b6,#ffd2b6,#ffd0b6,#ffceb6,#ffccb6,#ffcab6,#ffc8b6,#ffc6b6,#ffc4b6,#ffc2b6,#ffc0b6,#ffbeb6,#ffbcb6,#ffbab6,#ffb8b6)"></i><i style="width:86.62px;height:86.62px;margin:-43.31px 0 0 -43.31px;background:conic-gradient(from 90deg,#ffbebc,#ffbec2,#ffbec8,#ffbecd,#ffbfd3,#ffbfd9,#ffbfde,#ffbfe4,#ffbfea,#ffc0f0,#ffc0f5,#ffc0fb,#ffc0ff,#ffc0ff,#ffc0ff,#ffc0ff,#ffc0ff,#fbc0ff,#f6c0ff,#f1c0ff,#ecc0ff,#e7c0ff,#e2bfff,#ddbfff,#d9bfff,#d4bfff,#cfbfff,#cabfff,#c5bfff,#bfbfff,#bcc0ff,#bac4ff,#b8c7ff,#b7cbfe,#b5cefe,#b3d2fe,#b1d5fe,#afd9fe,#addcfd,#abe0fd,#a9e4fd,#a7e7fd,#a4ebfc,#a2eefc,#9ff2fc,#9df6fc,#9af9fb,#97fdfb,#96fef8,#96fef4,#96feef,#96fdeb,#96fde6,#96fde2,#96fddd,#96fdd9,#96fdd4,#96fdd0,#96fdcb,#96fdc8,#96fcc5,#96fcc2,#96fcbf,#96fcbc,#96fcb9,#96fcb6,#9efcb6,#a7fcb7,#affcb7,#b7fcb8,#befcb8,#c6fdb8,#cdfdb9,#d4fdb9,#dbfdba,#e2fdba,#e9fdba,#f0fdbb,#f6fdbb,#fdfdbc,#fffcbc,#fffbbc,#fffabc,#fff8bc,#fff7bc,#fff6bc,#fff5bc,#fff3bc,#fff2bc,#fff1bc,#ffefbc,#ffeebc,#ffedbc,#ffecbc,#ffeabc,#ffe9bc,#ffe8bc,#ffe6bc,#ffe5bc,#ffe4bc,#ffe3bc,#ffe1bc,#ffdfbc,#ffddbc,#ffdbbc,#ffd9bc,#ffd7bc,#ffd6bc,#ffd4bc,#ffd2bc,#ffd0bc,#ffcebc,#ffccbc,#ffcbbc,#ffc9bc,#ffc7bc,#ffc5bc,#ffc3bc,#ffc1bc,#ffc0bc,#ffbebc)"></i><i style="width:78.75px;height:78.75px;margin:-39.38px 0 0 -39.38px;background:conic-gradient(from 90deg,#ffc4c2,#ffc4c8,#ffc4cd,#ffc4d2,#ffc5d7,#ffc5dc,#ffc5e2,#ffc5e7,#ffc5ec,#ffc6f1,#ffc6f6,#ffc6fc,#ffc6ff,#ffc6ff,#ffc6ff,#ffc6ff,#ffc6ff,#fbc6ff,#f7c6ff,#f3c6ff,#eec6ff,#eac5ff,#e5c5ff,#e1c5ff,#dcc5ff,#d8c5ff,#d3c5ff,#cfc5ff,#cac5ff,#c6c5ff,#c2c6ff,#c1c9ff,#bfccff,#bed0fe,#bcd3fe,#bad6fe,#b9d9fe,#b7dcfe,#b5e0fd,#b3e3fd,#b2e6fd,#b0e9fd,#aeedfd,#acf0fc,#a9f3fc,#a7f6fc,#a5fafc,#a2fdfb,#a2fef9,#a2fef5,#a2fef1,#a2feed,#a2fde8,#a2fde4,#a2fde0,#a2fddc,#a2fdd8,#a2fdd4,#a2fdd0,#a2fdcd,#a2fdcb,#a2fdc8,#a2fdc5,#a2fcc3,#a2fcc0,#a2fcbd,#a9fcbe,#b0fcbe,#b7fdbe,#befdbf,#c5fdbf,#cbfdbf,#d2fdc0,#d8fdc0,#dffdc0,#e5fdc1,#ebfdc1,#f1fdc1,#f7fdc2,#fdfdc2,#fffdc2,#fffbc2,#fffac2,#fff9c2,#fff8c2,#fff7c2,#fff6c2,#fff4c2,#fff3c2,#fff2c2,#fff1c2,#fff0c2,#ffefc2,#ffedc2,#ffecc2,#ffebc2,#ffeac2,#ffe9c2,#ffe8c2,#ffe6c2,#ffe5c2,#ffe4c2,#ffe2c2,#ffe0c2,#ffdfc2,#ffddc2,#ffdbc2,#ffdac2,#ffd8c2,#ffd6c2,#ffd5c2,#ffd3c2,#ffd1c2,#ffd0c2,#ffcec2,#ffccc2,#ffcbc2,#ffc9c2,#ffc7c2,#ffc6c2,#ffc4c2)"></i><i style="width:70.88px;height:70.88px;margin:-35.44px 0 0 -35.44px;background:conic-gradient(from 90deg,#ffcac9,#ffcacd,#ffcad2,#ffcbd7,#ffcbdb,#ffcbe0,#ffcbe5,#ffcbe9,#ffcbee,#ffccf3,#ffccf7,#ffccfc,#ffccff,#ffccff,#ffccff,#ffccff,#ffccff,#fcccff,#f8ccff,#f4ccff,#f0ccff,#ecccff,#e8cbff,#e4cbff,#e0cbff,#dccbff,#d8cbff,#d4cbff,#d0cbff,#cccbff,#c8ccff,#c7cfff,#c6d2ff,#c5d5fe,#c3d7fe,#c2dafe,#c0ddfe,#bfe0fe,#bde3fe,#bce6fd,#bae9fd,#b8ecfd,#b7effd,#b5f2fd,#b3f4fc,#b1f7fc,#affafc,#adfdfc,#adfef9,#adfef6,#adfef2,#adfeee,#adfeeb,#adfee7,#adfde4,#adfde0,#adfddc,#adfdd9,#adfdd5,#adfdd3,#adfdd0,#adfdce,#adfdcb,#adfdc9,#adfdc7,#adfdc4,#b3fdc5,#b9fdc5,#bffdc5,#c5fdc5,#cbfdc6,#d1fdc6,#d7fdc6,#dcfdc7,#e2fdc7,#e8fdc7,#edfdc8,#f3fdc8,#f8fdc8,#fdfdc9,#fffdc9,#fffcc9,#fffbc9,#fffac9,#fff9c9,#fff8c9,#fff7c9,#fff6c9,#fff4c9,#fff3c9,#fff2c9,#fff1c9,#fff0c9,#ffefc9,#ffeec9,#ffedc9,#ffecc9,#ffebc9,#ffeac9,#ffe9c9,#ffe8c9,#ffe6c9,#ffe5c9,#ffe3c9,#ffe2c9,#ffe0c9,#ffdfc9,#ffddc9,#ffdcc9,#ffdac9,#ffd9c9,#ffd8c9,#ffd6c9,#ffd5c9,#ffd3c9,#ffd2c9,#ffd0c9,#ffcfc9,#ffcdc9,#ffccc9,#ffcac9)"></i><i style="width:63.00px;height:63.00px;margin:-31.50px 0 0 -31.50px;background:conic-gradient(from 90deg,#ffd0cf,#ffd0d3,#ffd1d7,#ffd1db,#ffd1e0,#ffd1e4,#ffd1e8,#ffd1ec,#ffd1f0,#ffd2f4,#ffd2f8,#ffd2fc,#ffd2ff,#ffd2ff,#ffd2ff,#ffd2ff,#ffd2ff,#fdd2ff,#f9d2ff,#f6d2ff,#f2d2ff,#eed2ff,#ebd1ff,#e7d1ff,#e4d1ff,#e0d1ff,#ddd1ff,#d9d1ff,#d5d1ff,#d2d1ff,#cfd2ff,#ced4ff,#cdd7ff,#cbdaff,#cadcfe,#c9dffe,#c8e1fe,#c7e4fe,#c5e6fe,#c4e9fe,#c2ebfd,#c1eefd,#c0f1fd,#bef3fd,#bdf6fd,#bbf8fc,#b9fbfc,#b8fdfc,#b7fefa,#b7fef7,#b7fef4,#b7fef0,#b7feed,#b7feea,#b7fee7,#b7fde4,#b7fde0,#b7fddd,#b7fdda,#b7fdd8,#b7fdd6,#b7fdd4,#b7fdd2,#b7fdcf,#b7fdcd,#b7fdcb,#bdfdcc,#c2fdcc,#c7fdcc,#cdfdcc,#d2fdcd,#d7fdcd,#dcfdcd,#e1fdcd,#e6fdce,#eafdce,#effdce,#f4fece,#f9fecf,#fdfecf,#fffdcf,#fffccf,#fffbcf,#fffacf,#fff9cf,#fff8cf,#fff8cf,#fff7cf,#fff6cf,#fff5cf,#fff4cf,#fff3cf,#fff2cf,#fff1cf,#fff0cf,#ffefcf,#ffeecf,#ffedcf,#ffedcf,#ffeccf,#ffebcf,#ffe9cf,#ffe8cf,#ffe7cf,#ffe5cf,#ffe4cf,#ffe3cf,#ffe1cf,#ffe0cf,#ffdfcf,#ffddcf,#ffdccf,#ffdbcf,#ffdacf,#ffd8cf,#ffd7cf,#ffd6cf,#ffd4cf,#ffd3cf,#ffd2cf,#ffd0cf)"></i><i style="width:55.12px;height:55.12px;margin:-27.56px 0 0 -27.56px;background:conic-gradient(from 90deg,#ffd7d6,#ffd7d9,#ffd7dd,#ffd7e0,#ffd7e4,#ffd7e7,#ffd7eb,#ffd7ee,#ffd8f2,#ffd8f6,#ffd8f9,#ffd8fd,#ffd8ff,#ffd8ff,#ffd8ff,#ffd8ff,#ffd8ff,#fdd8ff,#fad8ff,#f7d8ff,#f4d8ff,#f1d8ff,#eed8ff,#ead7ff,#e7d7ff,#e4d7ff,#e1d7ff,#ded7ff,#dbd7ff,#d8d7ff,#d5d8ff,#d4daff,#d3dcff,#d2dfff,#d1e1fe,#d0e3fe,#cfe5fe,#cee7fe,#cdeafe,#ccecfe,#cbeefe,#caf0fd,#c8f2fd,#c7f5fd,#c6f7fd,#c5f9fd,#c3fbfd,#c2fefc,#c2fefb,#c2fef8,#c2fef5,#c2fef2,#c2fef0,#c2feed,#c2feea,#c2fee7,#c2fee4,#c2fee2,#c2fddf,#c2fddd,#c2fddb,#c2fdd9,#c2fdd8,#c2fdd6,#c2fdd4,#c2fdd2,#c6fdd2,#cbfdd3,#cffdd3,#d4fdd3,#d8fdd3,#dcfdd4,#e1fdd4,#e5fdd4,#e9fed4,#edfed4,#f1fed5,#f5fed5,#fafed5,#fefed5,#fffdd6,#fffcd6,#fffcd6,#fffbd6,#fffad6,#fff9d6,#fff9d6,#fff8d6,#fff7d6,#fff6d6,#fff5d6,#fff5d6,#fff4d6,#fff3d6,#fff2d6,#fff1d6,#fff1d6,#fff0d6,#ffefd6,#ffeed6,#ffedd6,#ffecd6,#ffebd6,#ffead6,#ffe9d6,#ffe8d6,#ffe7d6,#ffe5d6,#ffe4d6,#ffe3d6,#ffe2d6,#ffe1d6,#ffe0d6,#ffdfd6,#ffddd6,#ffdcd6,#ffdbd6,#ffdad6,#ffd9d6,#ffd8d6,#ffd7d6)"></i><i style="width:47.25px;height:47.25px;margin:-23.62px 0 0 -23.62px;background:conic-gradient(from 90deg,#ffdddc,#ffdddf,#ffdde2,#ffdde5,#ffdde8,#ffddeb,#ffddee,#ffddf1,#ffdef4,#ffdef7,#ffdefa,#ffdefd,#ffdeff,#ffdeff,#ffdeff,#ffdeff,#ffdeff,#fedeff,#fbdeff,#f8deff,#f6deff,#f3deff,#f0deff,#eedeff,#ebddff,#e8ddff,#e6ddff,#e3ddff,#e0ddff,#deddff,#dcdeff,#dbe0ff,#dae2ff,#d9e3ff,#d8e5fe,#d8e7fe,#d7e9fe,#d6ebfe,#d5edfe,#d4effe,#d3f1fe,#d2f3fe,#d1f4fd,#d0f6fd,#cff8fd,#cefafd,#cdfcfd,#ccfefd,#ccfefb,#ccfef9,#ccfef7,#ccfef4,#ccfef2,#ccfef0,#ccfeed,#ccfeeb,#ccfee9,#ccfee6,#ccfee4,#ccfee2,#ccfee1,#ccfedf,#ccfdde,#ccfddc,#ccfddb,#ccfdd9,#cffdd9,#d3fdda,#d7fdda,#dbfeda,#defeda,#e2feda,#e5feda,#e9fedb,#ecfedb,#f0fedb,#f3fedb,#f7fedb,#fafedc,#fefedc,#fffedc,#fffddc,#fffcdc,#fffcdc,#fffbdc,#fffadc,#fffadc,#fff9dc,#fff8dc,#fff7dc,#fff7dc,#fff6dc,#fff5dc,#fff5dc,#fff4dc,#fff3dc,#fff3dc,#fff2dc,#fff1dc,#fff1dc,#fff0dc,#ffefdc,#ffeedc,#ffeddc,#ffecdc,#ffebdc,#ffeadc,#ffe9dc,#ffe8dc,#ffe7dc,#ffe6dc,#ffe5dc,#ffe4dc,#ffe3dc,#ffe3dc,#ffe2dc,#ffe1dc,#ffe0dc,#ffdfdc,#ffdedc,#ffdddc)"></i><i style="width:39.38px;height:39.38px;margin:-19.69px 0 0 -19.69px;background:conic-gradient(from 90deg,#ffe3e2,#ffe3e5,#ffe3e7,#ffe3ea,#ffe3ec,#ffe3ef,#ffe3f1,#ffe4f4,#ffe4f6,#ffe4f8,#ffe4fb,#ffe4fd,#ffe4ff,#ffe4ff,#ffe4ff,#ffe4ff,#ffe4ff,#fee4ff,#fce4ff,#fae4ff,#f7e4ff,#f5e4ff,#f3e4ff,#f1e4ff,#efe4ff,#ede4ff,#eae4ff,#e8e3ff,#e6e3ff,#e4e3ff,#e2e4ff,#e1e5ff,#e1e7ff,#e0e8ff,#dfeaff,#dfecfe,#deedfe,#ddeffe,#ddf0fe,#dcf2fe,#dbf3fe,#daf5fe,#daf6fe,#d9f8fe,#d8f9fe,#d7fbfd,#d6fcfd,#d6fefd,#d5fefc,#d5fefa,#d5fef8,#d5fef6,#d5fef4,#d5fef2,#d5fef0,#d5feef,#d5feed,#d5feeb,#d5fee9,#d5fee8,#d5fee6,#d5fee5,#d5fee4,#d5fee3,#d5fee1,#d5fee0,#d8fee0,#dbfee0,#defee1,#e1fee1,#e4fee1,#e7fee1,#eafee1,#edfee1,#f0fee1,#f3fee2,#f6fee2,#f8fee2,#fbfee2,#fefee2,#fffee2,#fffde2,#fffde2,#fffce2,#fffce2,#fffbe2,#fffbe2,#fffae2,#fff9e2,#fff9e2,#fff8e2,#fff8e2,#fff7e2,#fff7e2,#fff6e2,#fff6e2,#fff5e2,#fff4e2,#fff4e2,#fff3e2,#fff3e2,#fff2e2,#fff1e2,#fff0e2,#fff0e2,#ffefe2,#ffeee2,#ffede2,#ffece2,#ffece2,#ffebe2,#ffeae2,#ffe9e2,#ffe9e2,#ffe8e2,#ffe7e2,#ffe6e2,#ffe5e2,#ffe5e2,#ffe4e2,#ffe3e2)"></i><i style="width:31.50px;height:31.50px;margin:-15.75px 0 0 -15.75px;background:conic-gradient(from 90deg,#ffe9e9,#ffe9eb,#ffe9ed,#ffe9ee,#ffe9f0,#ffeaf2,#ffeaf4,#ffeaf6,#ffeaf8,#ffeafa,#ffeafc,#ffeafe,#ffeaff,#ffeaff,#ffeaff,#ffeaff,#ffeaff,#feeaff,#fdeaff,#fbeaff,#f9eaff,#f7eaff,#f6eaff,#f4eaff,#f2eaff,#f1eaff,#efeaff,#edeaff,#eceaff,#eaeaff,#e9eaff,#e8ebff,#e7ecff,#e7edff,#e6efff,#e6f0ff,#e5f1fe,#e5f2fe,#e4f3fe,#e4f5fe,#e3f6fe,#e3f7fe,#e2f8fe,#e1f9fe,#e1fbfe,#e0fcfe,#e0fdfe,#dffefe,#dffffd,#dffffb,#dffffa,#dffef8,#dffef7,#dffef5,#dffef4,#dffef2,#dffef1,#dffeef,#dffeee,#dffeed,#dffeec,#dffeeb,#dffeea,#dffee9,#dffee8,#dffee7,#e1fee7,#e4fee7,#e6fee7,#e8fee7,#eafee8,#edfee8,#effee8,#f1fee8,#f3fee8,#f5fee8,#f8fee8,#fafee8,#fcfee9,#fefee9,#fffee9,#fffee9,#fffde9,#fffde9,#fffce9,#fffce9,#fffce9,#fffbe9,#fffbe9,#fffae9,#fffae9,#fff9e9,#fff9e9,#fff9e9,#fff8e9,#fff8e9,#fff7e9,#fff7e9,#fff6e9,#fff6e9,#fff6e9,#fff5e9,#fff4e9,#fff4e9,#fff3e9,#fff2e9,#fff2e9,#fff1e9,#fff1e9,#fff0e9,#ffefe9,#ffefe9,#ffeee9,#ffeee9,#ffede9,#ffece9,#ffece9,#ffebe9,#ffeae9,#ffeae9,#ffe9e9)"></i><i style="width:23.62px;height:23.62px;margin:-11.81px 0 0 -11.81px;background:conic-gradient(from 90deg,#ffefef,#ffeff0,#fff0f2,#fff0f3,#fff0f5,#fff0f6,#fff0f7,#fff0f9,#fff0fa,#fff0fb,#fff0fd,#fff0fe,#fff0ff,#fff0ff,#fff0ff,#fff0ff,#fff0ff,#fff0ff,#fdf0ff,#fcf0ff,#fbf0ff,#faf0ff,#f8f0ff,#f7f0ff,#f6f0ff,#f5f0ff,#f4f0ff,#f2f0ff,#f1f0ff,#f0f0ff,#eff0ff,#eff1ff,#eef2ff,#eef3ff,#edf3ff,#edf4ff,#edf5ff,#ecf6ff,#ecf7ff,#ecf8fe,#ebf8fe,#ebf9fe,#eafafe,#eafbfe,#eafcfe,#e9fdfe,#e9fefe,#e8fefe,#e8fffd,#e8fffc,#e8fffb,#e8fffa,#e8fff9,#e8fff8,#e8fff7,#e8fef6,#e8fef5,#e8fef4,#e8fef3,#e8fef2,#e8fef1,#e8fef1,#e8fef0,#e8feef,#e8feef,#e8feee,#eafeee,#ecfeee,#edfeee,#effeee,#f0feee,#f2feee,#f3feee,#f5feef,#f7feef,#f8feef,#fafeef,#fbfeef,#fdffef,#feffef,#fffeef,#fffeef,#fffeef,#fffdef,#fffdef,#fffdef,#fffdef,#fffcef,#fffcef,#fffcef,#fffbef,#fffbef,#fffbef,#fffaef,#fffaef,#fffaef,#fff9ef,#fff9ef,#fff9ef,#fff9ef,#fff8ef,#fff8ef,#fff7ef,#fff7ef,#fff6ef,#fff6ef,#fff6ef,#fff5ef,#fff5ef,#fff4ef,#fff4ef,#fff3ef,#fff3ef,#fff3ef,#fff2ef,#fff2ef,#fff1ef,#fff1ef,#fff0ef,#fff0ef,#ffefef)"></i><i style="width:15.75px;height:15.75px;margin:-7.88px 0 0 -7.88px;background:conic-gradient(from 90deg,#fff6f5,#fff6f6,#fff6f7,#fff6f8,#fff6f9,#fff6fa,#fff6fa,#fff6fb,#fff6fc,#fff6fd,#fff6fe,#fff6fe,#fff6ff,#fff6ff,#fff6ff,#fff6ff,#fff6ff,#fff6ff,#fef6ff,#fdf6ff,#fdf6ff,#fcf6ff,#fbf6ff,#faf6ff,#faf6ff,#f9f6ff,#f8f6ff,#f7f6ff,#f7f6ff,#f6f6ff,#f5f6ff,#f5f6ff,#f5f7ff,#f5f8ff,#f4f8ff,#f4f9ff,#f4f9ff,#f4faff,#f4faff,#f3fbff,#f3fbff,#f3fcff,#f3fcff,#f2fdff,#f2fdfe,#f2fefe,#f2fefe,#f2fffe,#f1fffe,#f1fffd,#f1fffd,#f1fffc,#f1fffb,#f1fffb,#f1fffa,#f1fffa,#f1fff9,#f1fff8,#f1fff8,#f1fff7,#f1fff7,#f1fff6,#f1fff6,#f1fff6,#f1fff5,#f1fff5,#f2fff5,#f3fff5,#f4fff5,#f5fff5,#f6fff5,#f7fff5,#f8fff5,#f9fff5,#fafff5,#fbfff5,#fcfff5,#fdfff5,#fefff5,#fffff5,#fffff5,#fffef5,#fffef5,#fffef5,#fffef5,#fffef5,#fffef5,#fffdf5,#fffdf5,#fffdf5,#fffdf5,#fffdf5,#fffcf5,#fffcf5,#fffcf5,#fffcf5,#fffcf5,#fffcf5,#fffbf5,#fffbf5,#fffbf5,#fffbf5,#fffaf5,#fffaf5,#fffaf5,#fffaf5,#fff9f5,#fff9f5,#fff9f5,#fff9f5,#fff8f5,#fff8f5,#fff8f5,#fff8f5,#fff7f5,#fff7f5,#fff7f5,#fff6f5,#fff6f5,#fff6f5,#fff6f5)"></i><i style="width:7.88px;height:7.88px;margin:-3.94px 0 0 -3.94px;background:conic-gradient(from 90deg,#fffcfc,#fffcfc,#fffcfc,#fffcfd,#fffcfd,#fffcfd,#fffcfd,#fffcfe,#fffcfe,#fffcfe,#fffcff,#fffcff,#fffcff,#fffcff,#fffcff,#fffcff,#fffcff,#fffcff,#fffcff,#fefcff,#fefcff,#fefcff,#fefcff,#fdfcff,#fdfcff,#fdfcff,#fdfcff,#fcfcff,#fcfcff,#fcfcff,#fcfcff,#fcfcff,#fcfcff,#fcfdff,#fbfdff,#fbfdff,#fbfdff,#fbfdff,#fbfdff,#fbfeff,#fbfeff,#fbfeff,#fbfeff,#fbfeff,#fbfeff,#fbffff,#fbffff,#fbffff,#fbffff,#fbfffe,#fbfffe,#fbfffe,#fbfffe,#fbfffe,#fbfffd,#fbfffd,#fbfffd,#fbfffd,#fbfffd,#fbfffc,#fbfffc,#fbfffc,#fbfffc,#fbfffc,#fbfffc,#fbfffc,#fbfffc,#fbfffc,#fbfffc,#fcfffc,#fcfffc,#fcfffc,#fdfffc,#fdfffc,#fdfffc,#fefffc,#fefffc,#fefffc,#fffffc,#fffffc,#fffffc,#fffffc,#fffffc,#fffffc,#fffffc,#fffffc,#fffffc,#fffefc,#fffefc,#fffefc,#fffefc,#fffefc,#fffefc,#fffefc,#fffefc,#fffefc,#fffefc,#fffefc,#fffefc,#fffefc,#fffefc,#fffefc,#fffefc,#fffdfc,#fffdfc,#fffdfc,#fffdfc,#fffdfc,#fffdfc,#fffdfc,#fffdfc,#fffdfc,#fffdfc,#fffdfc,#fffcfc,#fffcfc,#fffcfc,#fffcfc,#fffcfc,#fffcfc,#fffcfc)"></i></div></div></div>
<svg class="abs" style="left:340px;top:30px" width="360" height="350" viewBox="340 30 360 350">
 <g fill="#fff" fill-opacity=".7">
  <path d="M513.0 204.1L636.6 120.8A11.0 11.0 0 1 1 647.5 139.9Z"/>
  <path d="M513.0 204.1L653.7 155.2A11.0 11.0 0 1 1 659.3 176.3Z"/>
  <path d="M513.0 204.1L669.7 193.1A11.0 11.0 0 1 1 669.7 215.1Z"/>
  <path d="M513.0 204.1L659.3 231.9A11.0 11.0 0 1 1 653.6 253.1Z"/>
  <path d="M513.0 204.1L647.2 268.9A11.0 11.0 0 1 1 636.3 287.9Z"/>
 </g>
 <circle cx="642.8" cy="129.9" r="10.6" fill="#ff530d" stroke="#fff" stroke-width="2.400"/>
 <circle cx="657.3" cy="165.5" r="10.2" fill="#e82c0c" stroke="#c8c8c8" stroke-opacity=".55" stroke-width="1.600"/>
 <circle cx="670.5" cy="204.1" r="10.2" fill="#ff1a00" stroke="#c8c8c8" stroke-opacity=".55" stroke-width="1.600"/>
 <path d="M660.0 199.8l5.200 4.300-5.200 4.300z" fill="#fff"/>
 <circle cx="657.3" cy="242.8" r="10.2" fill="#e8257a" stroke="#c8c8c8" stroke-opacity=".55" stroke-width="1.600"/>
 <circle cx="642.4" cy="278.8" r="10.2" fill="#ff40ff" stroke="#c8c8c8" stroke-opacity=".55" stroke-width="1.600"/>
</svg>

<!-- slider tracks -->
<div class="trk" style="top:442px"></div>
<div class="trk" style="top:458px"></div>
<div class="trk" style="top:475px"></div>
<div class="trk" style="top:502px"></div>

<div id="vals"></div>
<div id="selpanel"></div>
<div class="grad" style="top:442px;background:linear-gradient(90deg,#00530d 6px,#ff530d 168px)"></div>
<div class="grad" style="top:458px;background:linear-gradient(90deg,#ff1a0d 6px,#ffff0d 168px)"></div>
<div class="grad" style="top:475px;background:linear-gradient(90deg,#ff5300 6px,#ff539c 87px,#ff53f8 168px)"></div>
<div class="grad" style="top:502px;background:linear-gradient(90deg,#000 6px,#ff530d 168px)"></div>
<div class="hdl" style="left:243.5px;top:448.5px"></div>
<div class="hdl" style="left:134.9px;top:464.5px"></div>
<div class="hdl" style="left:90.7px;top:481.5px"></div>
<div class="hdl" style="left:243.5px;top:508.5px"></div>
<div class="dot" style="left:403.7px;top:448.5px;background:#e82c0c"></div>
<div class="dot" style="left:285.0px;top:464.5px;background:#e82c0c"></div>
<div class="dot" style="left:264.8px;top:481.5px;background:#e82c0c"></div>
<div class="dot" style="left:403.7px;top:508.5px;background:#e82c0c"></div>
<div class="dot" style="left:592.9px;top:448.5px;background:#ff1a00"></div>
<div class="dot" style="left:431.9px;top:464.5px;background:#ff1a00"></div>
<div class="dot" style="left:431.9px;top:481.5px;background:#ff1a00"></div>
<div class="dot" style="left:592.9px;top:508.5px;background:#ff1a00"></div>
<div class="dot" style="left:753.1px;top:448.5px;background:#e8257a"></div>
<div class="dot" style="left:614.2px;top:464.5px;background:#e8257a"></div>
<div class="dot" style="left:683.6px;top:481.5px;background:#e8257a"></div>
<div class="dot" style="left:753.1px;top:508.5px;background:#e8257a"></div>
<div class="dot" style="left:942.3px;top:448.5px;background:#ff40ff"></div>
<div class="dot" style="left:789.5px;top:464.5px;background:#ff40ff"></div>
<div class="dot" style="left:942.3px;top:481.5px;background:#ff40ff"></div>
<div class="dot" style="left:942.3px;top:508.5px;background:#ff40ff"></div>
<svg class="abs" style="left:111.4px;top:532.4px" width="3.2" height="6.4" viewBox="0 0 3.2 6.4"><path d="M0 0l3.200 3.200L0 6.400z" fill="#e0e0e0"/></svg>
<div class="lbl" style="left:121.8px;top:531.3px;color:#e6e6e6;transform:scaleX(.92)">RGB</div>
<div class="lbl" style="left:122.6px;top:549.2px;color:#e6e6e6;transform:scaleX(.927)">HEX</div>
<div class="bx" style="left:145.3px;top:527.2px;width:18px;height:16.3px;line-height:18.2px;color:#f2f2f2;background:#2a2a2a"><span style="transform:scaleX(.9)">255</span></div>
<div class="bx" style="left:165.1px;top:527.2px;width:18px;height:16.3px;line-height:18.2px;color:#f2f2f2;background:#2a2a2a"><span style="transform:scaleX(.9)">83</span></div>
<div class="bx" style="left:184.9px;top:527.2px;width:18px;height:16.3px;line-height:18.2px;color:#f2f2f2;background:#2a2a2a"><span style="transform:scaleX(.9)">13</span></div>
<div class="bx" style="left:145.3px;top:545.1px;width:57.6px;height:15.8px;line-height:17.4px;color:#f2f2f2;background:#2a2a2a"><span style="transform:scaleX(.88)">FF530D</span></div>
<div class="lbl" style="left:296.5px;top:531.3px;color:#6a6a6a;transform:scaleX(.92)">RGB</div>
<div class="lbl" style="left:297.3px;top:549.2px;color:#6a6a6a;transform:scaleX(.927)">HEX</div>
<div class="bx" style="left:320.0px;top:527.2px;width:18px;height:16.3px;line-height:18.2px;color:#727272;background:#2b2b2b"><span style="transform:scaleX(.9)">232</span></div>
<div class="bx" style="left:339.8px;top:527.2px;width:18px;height:16.3px;line-height:18.2px;color:#727272;background:#2b2b2b"><span style="transform:scaleX(.9)">44</span></div>
<div class="bx" style="left:359.6px;top:527.2px;width:18px;height:16.3px;line-height:18.2px;color:#727272;background:#2b2b2b"><span style="transform:scaleX(.9)">12</span></div>
<div class="bx" style="left:320.0px;top:545.1px;width:57.6px;height:15.8px;line-height:17.4px;color:#727272;background:#2b2b2b"><span style="transform:scaleX(.88)">E82C0C</span></div>
<div class="lbl" style="left:471.2px;top:531.3px;color:#6a6a6a;transform:scaleX(.92)">RGB</div>
<div class="lbl" style="left:472.0px;top:549.2px;color:#6a6a6a;transform:scaleX(.927)">HEX</div>
<div class="bx" style="left:494.7px;top:527.2px;width:18px;height:16.3px;line-height:18.2px;color:#727272;background:#2b2b2b"><span style="transform:scaleX(.9)">255</span></div>
<div class="bx" style="left:514.5px;top:527.2px;width:18px;height:16.3px;line-height:18.2px;color:#727272;background:#2b2b2b"><span style="transform:scaleX(.9)">0</span></div>
<div class="bx" style="left:534.3px;top:527.2px;width:18px;height:16.3px;line-height:18.2px;color:#727272;background:#2b2b2b"><span style="transform:scaleX(.9)">0</span></div>
<div class="bx" style="left:494.7px;top:545.1px;width:57.6px;height:15.8px;line-height:17.4px;color:#727272;background:#2b2b2b"><span style="transform:scaleX(.88)">FF0000</span></div>
<div class="lbl" style="left:645.9px;top:531.3px;color:#6a6a6a;transform:scaleX(.92)">RGB</div>
<div class="lbl" style="left:646.7px;top:549.2px;color:#6a6a6a;transform:scaleX(.927)">HEX</div>
<div class="bx" style="left:669.4px;top:527.2px;width:18px;height:16.3px;line-height:18.2px;color:#727272;background:#2b2b2b"><span style="transform:scaleX(.9)">232</span></div>
<div class="bx" style="left:689.2px;top:527.2px;width:18px;height:16.3px;line-height:18.2px;color:#727272;background:#2b2b2b"><span style="transform:scaleX(.9)">12</span></div>
<div class="bx" style="left:709.0px;top:527.2px;width:18px;height:16.3px;line-height:18.2px;color:#727272;background:#2b2b2b"><span style="transform:scaleX(.9)">122</span></div>
<div class="bx" style="left:669.4px;top:545.1px;width:57.6px;height:15.8px;line-height:17.4px;color:#727272;background:#2b2b2b"><span style="transform:scaleX(.88)">E80C7A</span></div>
<div class="lbl" style="left:820.6px;top:531.3px;color:#6a6a6a;transform:scaleX(.92)">RGB</div>
<div class="lbl" style="left:821.4px;top:549.2px;color:#6a6a6a;transform:scaleX(.927)">HEX</div>
<div class="bx" style="left:844.1px;top:527.2px;width:18px;height:16.3px;line-height:18.2px;color:#727272;background:#2b2b2b"><span style="transform:scaleX(.9)">255</span></div>
<div class="bx" style="left:863.9px;top:527.2px;width:18px;height:16.3px;line-height:18.2px;color:#727272;background:#2b2b2b"><span style="transform:scaleX(.9)">13</span></div>
<div class="bx" style="left:883.7px;top:527.2px;width:18px;height:16.3px;line-height:18.2px;color:#727272;background:#2b2b2b"><span style="transform:scaleX(.9)">255</span></div>
<div class="bx" style="left:844.1px;top:545.1px;width:57.6px;height:15.8px;line-height:17.4px;color:#727272;background:#2b2b2b"><span style="transform:scaleX(.88)">FF0DFF</span></div>
<div id="selbox"></div>

</body>
</html>
